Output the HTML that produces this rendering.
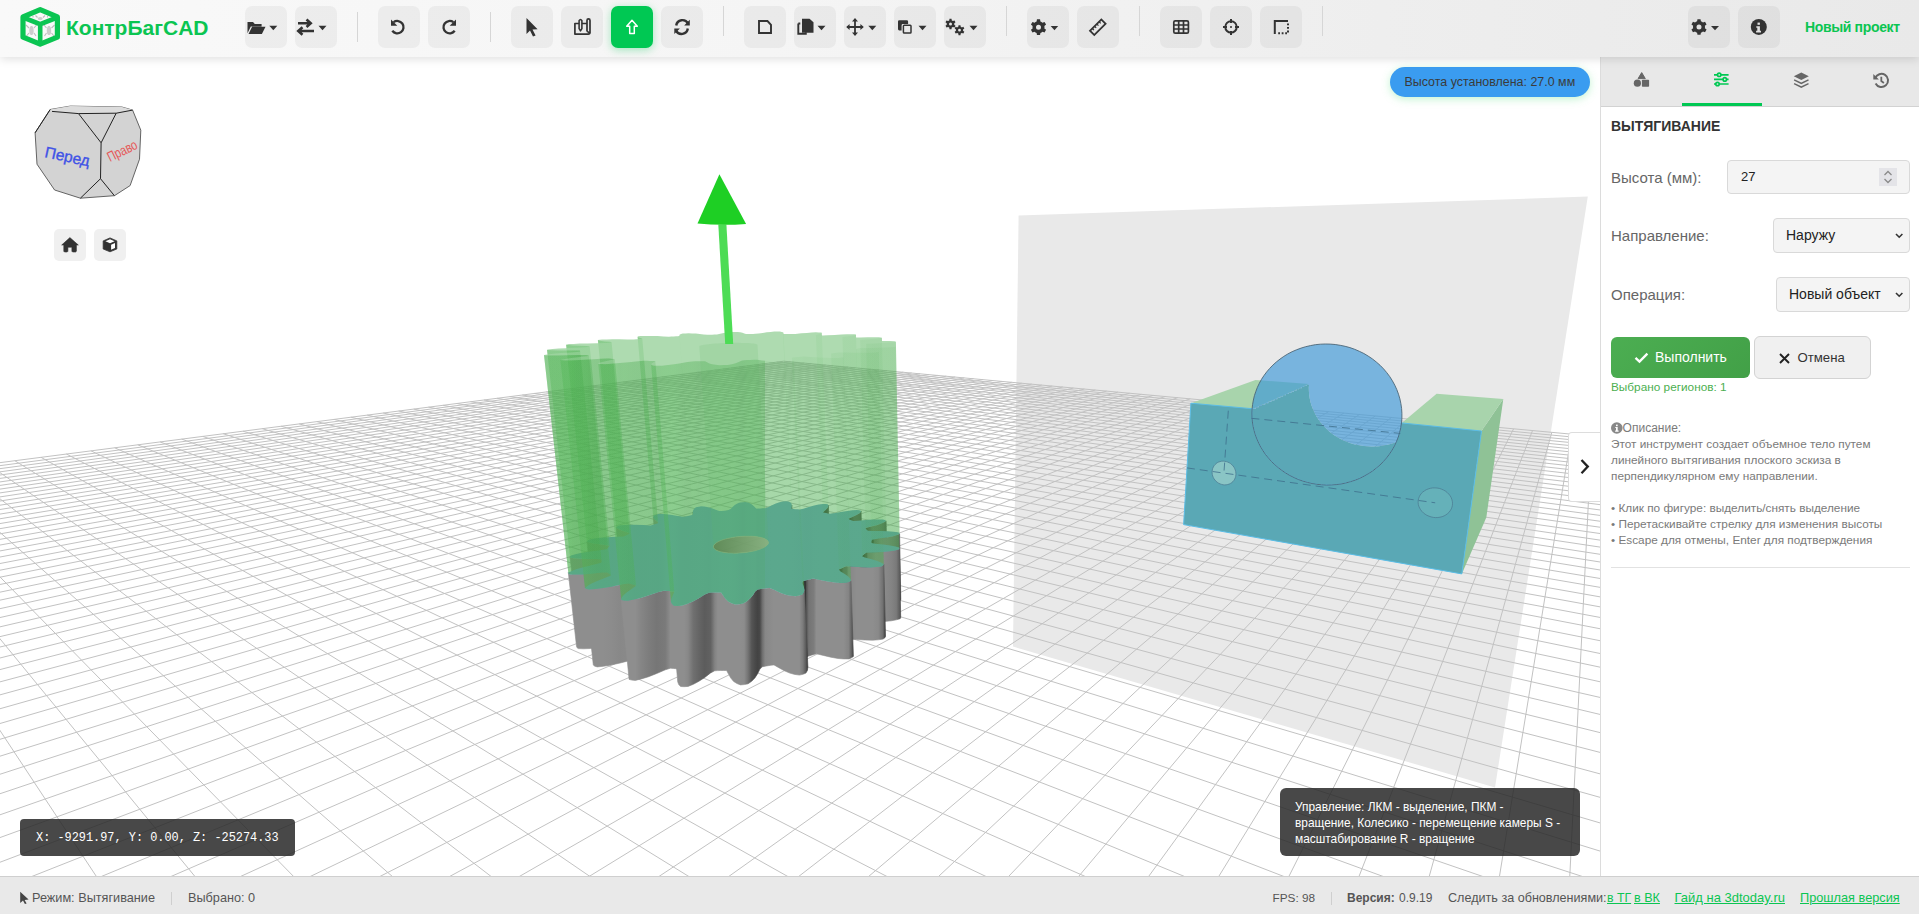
<!DOCTYPE html>
<html><head><meta charset="utf-8">
<style>
*{box-sizing:border-box;margin:0;padding:0}
html,body{width:1919px;height:914px;overflow:hidden;background:#fff;font-family:"Liberation Sans",sans-serif}
.abs{position:absolute}
#scene{position:absolute;left:0;top:0;width:1919px;height:914px}
#hdr{position:absolute;left:0;top:0;width:1919px;height:57px;background:linear-gradient(to right,#f9f9f9 0%,#f5f5f5 40%,#eeeeee 72%,#e9e9e9 100%);box-shadow:0 2px 9px rgba(0,0,0,0.13);z-index:5}
.btn{position:absolute;top:6px;width:42px;height:42px;border-radius:7px;background:rgba(0,0,0,0.045)}
.btn svg{position:absolute;left:0;top:0}
.sep{position:absolute;top:12px;width:1px;height:30px;background:#d6d6d6}
#panel{position:absolute;left:1600px;top:57px;width:319px;height:819px;background:#fff;border-left:1px solid #dcdcdc;z-index:4}
#tabs{position:absolute;left:0;top:0;width:319px;height:50px;background:#e8e8e8;border-bottom:1px solid #d2d2d2}
#status{position:absolute;left:0;top:876px;width:1919px;height:38px;background:#e9e9e9;border-top:1px solid #cfcfcf;z-index:6;font-size:12.7px;color:#555}
.lbl{position:absolute;font-size:15px;color:#666;white-space:nowrap}
.sel{position:absolute;height:34px;border:1px solid #d9d9d9;border-radius:4px;background:#f4f4f4;font-size:14px;color:#222}
.desc{position:absolute;left:10px;font-size:11.8px;color:#7a7a7a;white-space:nowrap}
</style></head><body>
<svg id="scene" width="1919" height="914" viewBox="0 0 1919 914">
<defs><linearGradient id="g1" gradientUnits="userSpaceOnUse" x1="850.4" y1="0" x2="862.9" y2="0"><stop offset="0.000" stop-color="#393939"/><stop offset="0.305" stop-color="#585858"/><stop offset="0.634" stop-color="#545454"/><stop offset="0.871" stop-color="#4a4a4a"/><stop offset="0.972" stop-color="#3e3e3e"/><stop offset="1.000" stop-color="#3a3a3a"/></linearGradient><linearGradient id="g2" gradientUnits="userSpaceOnUse" x1="867.4" y1="0" x2="887.5" y2="0"><stop offset="0.000" stop-color="#494949"/><stop offset="0.272" stop-color="#6d6d6d"/><stop offset="0.567" stop-color="#696969"/><stop offset="0.796" stop-color="#5e5e5e"/><stop offset="0.925" stop-color="#505050"/><stop offset="1.000" stop-color="#363636"/></linearGradient><linearGradient id="g3" gradientUnits="userSpaceOnUse" x1="873.2" y1="0" x2="900.8" y2="0"><stop offset="0.000" stop-color="#363636"/><stop offset="0.001" stop-color="#383838"/><stop offset="0.008" stop-color="#3b3b3b"/><stop offset="0.021" stop-color="#5e5e5e"/><stop offset="0.270" stop-color="#808080"/><stop offset="0.541" stop-color="#7d7d7d"/><stop offset="0.762" stop-color="#737373"/><stop offset="0.903" stop-color="#656565"/><stop offset="1.000" stop-color="#444444"/></linearGradient><linearGradient id="g4" gradientUnits="userSpaceOnUse" x1="864.2" y1="0" x2="900.7" y2="0"><stop offset="0.000" stop-color="#373737"/><stop offset="0.019" stop-color="#454545"/><stop offset="0.042" stop-color="#494949"/><stop offset="0.070" stop-color="#4d4d4d"/><stop offset="0.102" stop-color="#747474"/><stop offset="0.314" stop-color="#8c8c8c"/><stop offset="0.545" stop-color="#8a8a8a"/><stop offset="0.742" stop-color="#848484"/><stop offset="0.879" stop-color="#7a7a7a"/><stop offset="0.982" stop-color="#595959"/><stop offset="1.000" stop-color="#383838"/></linearGradient><linearGradient id="g5" gradientUnits="userSpaceOnUse" x1="841.6" y1="0" x2="885.5" y2="0"><stop offset="0.000" stop-color="#3e3e3e"/><stop offset="0.035" stop-color="#5b5b5b"/><stop offset="0.074" stop-color="#606060"/><stop offset="0.116" stop-color="#656565"/><stop offset="0.161" stop-color="#868686"/><stop offset="0.338" stop-color="#8e8e8e"/><stop offset="0.534" stop-color="#8e8e8e"/><stop offset="0.708" stop-color="#8e8e8e"/><stop offset="0.837" stop-color="#898989"/><stop offset="0.942" stop-color="#707070"/><stop offset="0.981" stop-color="#4a4a4a"/><stop offset="1.000" stop-color="#363636"/></linearGradient><linearGradient id="g6" gradientUnits="userSpaceOnUse" x1="805.9" y1="0" x2="853.4" y2="0"><stop offset="0.000" stop-color="#363636"/><stop offset="0.012" stop-color="#545454"/><stop offset="0.061" stop-color="#747474"/><stop offset="0.112" stop-color="#787878"/><stop offset="0.165" stop-color="#7c7c7c"/><stop offset="0.220" stop-color="#8e8e8e"/><stop offset="0.365" stop-color="#8e8e8e"/><stop offset="0.526" stop-color="#8e8e8e"/><stop offset="0.675" stop-color="#8e8e8e"/><stop offset="0.795" stop-color="#8e8e8e"/><stop offset="0.900" stop-color="#848484"/><stop offset="0.958" stop-color="#636363"/><stop offset="1.000" stop-color="#414141"/></linearGradient><linearGradient id="g7" gradientUnits="userSpaceOnUse" x1="677.7" y1="0" x2="807.9" y2="0"><stop offset="0.000" stop-color="#8e8e8e"/><stop offset="0.008" stop-color="#8e8e8e"/><stop offset="0.023" stop-color="#8e8e8e"/><stop offset="0.050" stop-color="#8e8e8e"/><stop offset="0.080" stop-color="#888888"/><stop offset="0.120" stop-color="#707070"/><stop offset="0.163" stop-color="#656565"/><stop offset="0.208" stop-color="#5c5c5c"/><stop offset="0.253" stop-color="#626262"/><stop offset="0.285" stop-color="#838383"/><stop offset="0.308" stop-color="#8e8e8e"/><stop offset="0.331" stop-color="#8e8e8e"/><stop offset="0.353" stop-color="#8e8e8e"/><stop offset="0.375" stop-color="#8e8e8e"/><stop offset="0.390" stop-color="#8e8e8e"/><stop offset="0.408" stop-color="#8e8e8e"/><stop offset="0.429" stop-color="#8e8e8e"/><stop offset="0.455" stop-color="#8e8e8e"/><stop offset="0.482" stop-color="#8e8e8e"/><stop offset="0.511" stop-color="#8c8c8c"/><stop offset="0.540" stop-color="#747474"/><stop offset="0.568" stop-color="#555555"/><stop offset="0.593" stop-color="#4a4a4a"/><stop offset="0.614" stop-color="#434343"/><stop offset="0.631" stop-color="#484848"/><stop offset="0.650" stop-color="#6e6e6e"/><stop offset="0.672" stop-color="#878787"/><stop offset="0.694" stop-color="#8a8a8a"/><stop offset="0.717" stop-color="#8c8c8c"/><stop offset="0.739" stop-color="#8e8e8e"/><stop offset="0.777" stop-color="#8e8e8e"/><stop offset="0.819" stop-color="#8e8e8e"/><stop offset="0.860" stop-color="#8e8e8e"/><stop offset="0.898" stop-color="#8e8e8e"/><stop offset="0.934" stop-color="#8e8e8e"/><stop offset="0.961" stop-color="#7c7c7c"/><stop offset="0.985" stop-color="#5a5a5a"/><stop offset="0.996" stop-color="#3d3d3d"/><stop offset="1.000" stop-color="#373737"/></linearGradient><linearGradient id="g8" gradientUnits="userSpaceOnUse" x1="629.1" y1="0" x2="680.8" y2="0"><stop offset="0.000" stop-color="#8e8e8e"/><stop offset="0.052" stop-color="#8e8e8e"/><stop offset="0.120" stop-color="#8e8e8e"/><stop offset="0.238" stop-color="#858585"/><stop offset="0.377" stop-color="#7d7d7d"/><stop offset="0.534" stop-color="#767676"/><stop offset="0.700" stop-color="#7a7a7a"/><stop offset="0.801" stop-color="#8e8e8e"/><stop offset="0.854" stop-color="#8e8e8e"/><stop offset="0.905" stop-color="#8e8e8e"/><stop offset="0.953" stop-color="#8e8e8e"/><stop offset="1.000" stop-color="#8e8e8e"/></linearGradient><linearGradient id="g9" gradientUnits="userSpaceOnUse" x1="593.3" y1="0" x2="643.1" y2="0"><stop offset="0.000" stop-color="#8e8e8e"/><stop offset="0.031" stop-color="#8e8e8e"/><stop offset="0.082" stop-color="#8e8e8e"/><stop offset="0.204" stop-color="#8e8e8e"/><stop offset="0.357" stop-color="#8c8c8c"/><stop offset="0.540" stop-color="#888888"/><stop offset="0.742" stop-color="#8a8a8a"/><stop offset="0.853" stop-color="#8e8e8e"/><stop offset="0.894" stop-color="#8e8e8e"/><stop offset="0.933" stop-color="#8e8e8e"/><stop offset="0.968" stop-color="#8e8e8e"/><stop offset="1.000" stop-color="#8e8e8e"/></linearGradient><linearGradient id="g10" gradientUnits="userSpaceOnUse" x1="576.5" y1="0" x2="618.3" y2="0"><stop offset="0.000" stop-color="#8e8e8e"/><stop offset="0.007" stop-color="#8e8e8e"/><stop offset="0.041" stop-color="#8e8e8e"/><stop offset="0.166" stop-color="#8e8e8e"/><stop offset="0.334" stop-color="#8e8e8e"/><stop offset="0.547" stop-color="#8e8e8e"/><stop offset="0.789" stop-color="#8e8e8e"/><stop offset="0.912" stop-color="#8e8e8e"/><stop offset="0.941" stop-color="#8e8e8e"/><stop offset="0.965" stop-color="#8e8e8e"/><stop offset="0.985" stop-color="#8e8e8e"/><stop offset="1.000" stop-color="#8e8e8e"/></linearGradient><linearGradient id="g11" gradientUnits="userSpaceOnUse" x1="577.8" y1="0" x2="608.8" y2="0"><stop offset="0.000" stop-color="#8e8e8e"/><stop offset="0.007" stop-color="#8e8e8e"/><stop offset="0.134" stop-color="#8e8e8e"/><stop offset="0.318" stop-color="#8e8e8e"/><stop offset="0.565" stop-color="#8e8e8e"/><stop offset="0.856" stop-color="#8e8e8e"/><stop offset="0.991" stop-color="#8e8e8e"/><stop offset="1.000" stop-color="#8e8e8e"/></linearGradient><linearGradient id="g12" gradientUnits="userSpaceOnUse" x1="594.0" y1="0" x2="616.4" y2="0"><stop offset="0.000" stop-color="#8e8e8e"/><stop offset="0.108" stop-color="#8e8e8e"/><stop offset="0.289" stop-color="#8e8e8e"/><stop offset="0.549" stop-color="#8e8e8e"/><stop offset="0.869" stop-color="#8e8e8e"/><stop offset="1.000" stop-color="#8e8e8e"/></linearGradient><linearGradient id="g13" gradientUnits="userSpaceOnUse" x1="622.3" y1="0" x2="635.7" y2="0"><stop offset="0.000" stop-color="#8e8e8e"/><stop offset="0.069" stop-color="#8e8e8e"/><stop offset="0.237" stop-color="#8e8e8e"/><stop offset="0.516" stop-color="#8e8e8e"/><stop offset="0.882" stop-color="#8e8e8e"/><stop offset="1.000" stop-color="#8e8e8e"/></linearGradient><linearGradient id="g14" gradientUnits="userSpaceOnUse" x1="658.6" y1="0" x2="663.5" y2="0"><stop offset="0.000" stop-color="#8e8e8e"/><stop offset="0.104" stop-color="#8e8e8e"/><stop offset="0.433" stop-color="#8e8e8e"/><stop offset="0.948" stop-color="#8e8e8e"/><stop offset="1.000" stop-color="#8e8e8e"/></linearGradient><linearGradient id="g15" gradientUnits="userSpaceOnUse" x1="697.4" y1="0" x2="697.6" y2="0"><stop offset="0.000" stop-color="#8e8e8e"/><stop offset="1.000" stop-color="#8e8e8e"/></linearGradient><linearGradient id="g16" gradientUnits="userSpaceOnUse" x1="794.4" y1="0" x2="794.7" y2="0"><stop offset="0.000" stop-color="#404040"/><stop offset="0.537" stop-color="#373737"/><stop offset="1.000" stop-color="#363636"/></linearGradient><linearGradient id="g17" gradientUnits="userSpaceOnUse" x1="825.4" y1="0" x2="830.7" y2="0"><stop offset="0.000" stop-color="#383838"/><stop offset="0.373" stop-color="#454545"/><stop offset="0.771" stop-color="#424242"/><stop offset="0.992" stop-color="#363636"/><stop offset="1.000" stop-color="#3a3a3a"/></linearGradient><linearGradient id="holeg" gradientUnits="userSpaceOnUse" x1="713.5" y1="0" x2="768.4" y2="0"><stop offset="0" stop-color="#5b8452"/><stop offset="0.45" stop-color="#6e9766"/><stop offset="1" stop-color="#86ad7e"/></linearGradient><linearGradient id="g18" gradientUnits="userSpaceOnUse" x1="848.4" y1="0" x2="886.1" y2="0"><stop offset="0.000" stop-color="#4db051"/><stop offset="0.028" stop-color="#4fb553"/><stop offset="0.059" stop-color="#4fb553"/><stop offset="0.094" stop-color="#4fb553"/><stop offset="0.133" stop-color="#4eb352"/><stop offset="0.248" stop-color="#4bac4f"/><stop offset="0.458" stop-color="#4aaa4e"/><stop offset="0.645" stop-color="#4bac4f"/><stop offset="0.798" stop-color="#4caf50"/><stop offset="0.920" stop-color="#4eb452"/><stop offset="0.970" stop-color="#4fb553"/><stop offset="1.000" stop-color="#4db151"/></linearGradient><linearGradient id="g19" gradientUnits="userSpaceOnUse" x1="865.5" y1="0" x2="899.6" y2="0"><stop offset="0.000" stop-color="#4bac4e"/><stop offset="0.011" stop-color="#4eb352"/><stop offset="0.027" stop-color="#4eb452"/><stop offset="0.048" stop-color="#4eb452"/><stop offset="0.075" stop-color="#4fb553"/><stop offset="0.198" stop-color="#4db151"/><stop offset="0.444" stop-color="#4caf50"/><stop offset="0.659" stop-color="#4db151"/><stop offset="0.828" stop-color="#4eb352"/><stop offset="0.956" stop-color="#4fb553"/><stop offset="0.991" stop-color="#4eb352"/><stop offset="1.000" stop-color="#4bac4f"/></linearGradient><linearGradient id="g20" gradientUnits="userSpaceOnUse" x1="871.4" y1="0" x2="899.4" y2="0"><stop offset="0.000" stop-color="#4db151"/><stop offset="0.006" stop-color="#4fb553"/><stop offset="0.138" stop-color="#4eb452"/><stop offset="0.427" stop-color="#4eb352"/><stop offset="0.674" stop-color="#4eb452"/><stop offset="0.860" stop-color="#4fb553"/><stop offset="0.990" stop-color="#4eb553"/><stop offset="1.000" stop-color="#4cb050"/></linearGradient><linearGradient id="g21" gradientUnits="userSpaceOnUse" x1="862.1" y1="0" x2="883.8" y2="0"><stop offset="0.000" stop-color="#4eb352"/><stop offset="0.125" stop-color="#4fb553"/><stop offset="0.443" stop-color="#4fb553"/><stop offset="0.706" stop-color="#4fb553"/><stop offset="0.889" stop-color="#4fb553"/><stop offset="1.000" stop-color="#4db251"/></linearGradient><linearGradient id="g22" gradientUnits="userSpaceOnUse" x1="838.9" y1="0" x2="851.0" y2="0"><stop offset="0.000" stop-color="#4caf50"/><stop offset="0.103" stop-color="#4eb553"/><stop offset="0.489" stop-color="#4fb553"/><stop offset="0.782" stop-color="#4eb452"/><stop offset="0.948" stop-color="#4eb352"/><stop offset="1.000" stop-color="#4cae50"/></linearGradient><linearGradient id="g23" gradientUnits="userSpaceOnUse" x1="802.4" y1="0" x2="804.4" y2="0"><stop offset="0.000" stop-color="#4db251"/><stop offset="0.727" stop-color="#4eb352"/><stop offset="1.000" stop-color="#4db251"/></linearGradient><linearGradient id="g24" gradientUnits="userSpaceOnUse" x1="671.0" y1="0" x2="674.3" y2="0"><stop offset="0.000" stop-color="#4eb452"/><stop offset="0.135" stop-color="#4db252"/><stop offset="0.586" stop-color="#4db251"/><stop offset="1.000" stop-color="#4fb553"/></linearGradient><linearGradient id="g25" gradientUnits="userSpaceOnUse" x1="621.3" y1="0" x2="636.0" y2="0"><stop offset="0.000" stop-color="#4fb553"/><stop offset="0.011" stop-color="#4eb352"/><stop offset="0.105" stop-color="#4db051"/><stop offset="0.352" stop-color="#4cae50"/><stop offset="0.693" stop-color="#4bad4f"/><stop offset="1.000" stop-color="#4eb452"/></linearGradient><linearGradient id="g26" gradientUnits="userSpaceOnUse" x1="585.0" y1="0" x2="610.9" y2="0"><stop offset="0.000" stop-color="#4eb452"/><stop offset="0.079" stop-color="#4caf50"/><stop offset="0.213" stop-color="#4bac4e"/><stop offset="0.446" stop-color="#49a94d"/><stop offset="0.738" stop-color="#49a84d"/><stop offset="1.000" stop-color="#4db051"/></linearGradient><linearGradient id="g27" gradientUnits="userSpaceOnUse" x1="568.3" y1="0" x2="601.6" y2="0"><stop offset="0.000" stop-color="#4db151"/><stop offset="0.104" stop-color="#4aa94d"/><stop offset="0.250" stop-color="#48a64c"/><stop offset="0.475" stop-color="#47a34a"/><stop offset="0.744" stop-color="#46a24a"/><stop offset="0.985" stop-color="#4bac4e"/><stop offset="0.996" stop-color="#4eb352"/><stop offset="0.998" stop-color="#4eb452"/><stop offset="1.000" stop-color="#4eb452"/></linearGradient><linearGradient id="g28" gradientUnits="userSpaceOnUse" x1="570.0" y1="0" x2="609.6" y2="0"><stop offset="0.000" stop-color="#4eb352"/><stop offset="0.021" stop-color="#4bac4f"/><stop offset="0.130" stop-color="#47a34b"/><stop offset="0.270" stop-color="#47a34a"/><stop offset="0.470" stop-color="#48a64c"/><stop offset="0.702" stop-color="#48a74c"/><stop offset="0.912" stop-color="#48a64c"/><stop offset="0.941" stop-color="#4caf50"/><stop offset="0.966" stop-color="#4db051"/><stop offset="0.985" stop-color="#4db151"/><stop offset="1.000" stop-color="#4fb553"/></linearGradient><linearGradient id="g29" gradientUnits="userSpaceOnUse" x1="586.9" y1="0" x2="629.6" y2="0"><stop offset="0.000" stop-color="#4eb553"/><stop offset="0.019" stop-color="#4cb050"/><stop offset="0.059" stop-color="#48a74c"/><stop offset="0.167" stop-color="#48a54b"/><stop offset="0.298" stop-color="#49a94d"/><stop offset="0.475" stop-color="#4aab4e"/><stop offset="0.676" stop-color="#4bac4f"/><stop offset="0.857" stop-color="#47a24a"/><stop offset="0.899" stop-color="#4aaa4e"/><stop offset="0.936" stop-color="#4bac4e"/><stop offset="0.970" stop-color="#4bad4f"/><stop offset="1.000" stop-color="#4eb352"/></linearGradient><linearGradient id="g30" gradientUnits="userSpaceOnUse" x1="616.1" y1="0" x2="658.1" y2="0"><stop offset="0.000" stop-color="#4db251"/><stop offset="0.039" stop-color="#4aab4e"/><stop offset="0.093" stop-color="#46a24a"/><stop offset="0.200" stop-color="#4aab4e"/><stop offset="0.323" stop-color="#4cae50"/><stop offset="0.480" stop-color="#4db051"/><stop offset="0.654" stop-color="#4db151"/><stop offset="0.812" stop-color="#49a94d"/><stop offset="0.864" stop-color="#47a44b"/><stop offset="0.912" stop-color="#48a64c"/><stop offset="0.957" stop-color="#49a74c"/><stop offset="1.000" stop-color="#4caf50"/></linearGradient><linearGradient id="g31" gradientUnits="userSpaceOnUse" x1="653.2" y1="0" x2="693.0" y2="0"><stop offset="0.000" stop-color="#4eb352"/><stop offset="0.012" stop-color="#4cae50"/><stop offset="0.067" stop-color="#48a54b"/><stop offset="0.133" stop-color="#49a84d"/><stop offset="0.234" stop-color="#4cb050"/><stop offset="0.347" stop-color="#4db251"/><stop offset="0.480" stop-color="#4eb452"/><stop offset="0.622" stop-color="#4eb452"/><stop offset="0.752" stop-color="#4cae50"/><stop offset="0.811" stop-color="#47a44b"/><stop offset="0.867" stop-color="#47a24a"/><stop offset="0.922" stop-color="#46a14a"/><stop offset="0.975" stop-color="#4aaa4e"/><stop offset="1.000" stop-color="#4db251"/></linearGradient><linearGradient id="g32" gradientUnits="userSpaceOnUse" x1="692.8" y1="0" x2="791.8" y2="0"><stop offset="0.000" stop-color="#4eb352"/><stop offset="0.015" stop-color="#4cb050"/><stop offset="0.058" stop-color="#47a34b"/><stop offset="0.120" stop-color="#4eb352"/><stop offset="0.194" stop-color="#4fb553"/><stop offset="0.268" stop-color="#4db251"/><stop offset="0.315" stop-color="#49a94d"/><stop offset="0.361" stop-color="#47a44b"/><stop offset="0.401" stop-color="#4caf50"/><stop offset="0.449" stop-color="#4aab4e"/><stop offset="0.504" stop-color="#4aaa4e"/><stop offset="0.558" stop-color="#4fb553"/><stop offset="0.605" stop-color="#4eb553"/><stop offset="0.640" stop-color="#4eb553"/><stop offset="0.685" stop-color="#4cae50"/><stop offset="0.731" stop-color="#47a44b"/><stop offset="0.800" stop-color="#4aaa4e"/><stop offset="0.876" stop-color="#48a54b"/><stop offset="0.939" stop-color="#4caf50"/><stop offset="0.982" stop-color="#4fb553"/><stop offset="1.000" stop-color="#4db252"/><stop offset="1.000" stop-color="#4db252"/></linearGradient><linearGradient id="g33" gradientUnits="userSpaceOnUse" x1="791.4" y1="0" x2="828.4" y2="0"><stop offset="0.000" stop-color="#4fb553"/><stop offset="0.053" stop-color="#4eb352"/><stop offset="0.108" stop-color="#4db251"/><stop offset="0.164" stop-color="#4db151"/><stop offset="0.223" stop-color="#4aaa4e"/><stop offset="0.321" stop-color="#46a24a"/><stop offset="0.471" stop-color="#47a44b"/><stop offset="0.612" stop-color="#46a24a"/><stop offset="0.737" stop-color="#47a34b"/><stop offset="0.848" stop-color="#4bac4f"/><stop offset="0.919" stop-color="#4eb352"/><stop offset="0.980" stop-color="#4fb553"/><stop offset="1.000" stop-color="#4eb352"/></linearGradient><linearGradient id="g34" gradientUnits="userSpaceOnUse" x1="822.9" y1="0" x2="861.1" y2="0"><stop offset="0.000" stop-color="#4eb452"/><stop offset="0.041" stop-color="#4fb553"/><stop offset="0.085" stop-color="#4eb553"/><stop offset="0.131" stop-color="#4eb452"/><stop offset="0.181" stop-color="#4cb050"/><stop offset="0.288" stop-color="#48a64c"/><stop offset="0.469" stop-color="#47a44b"/><stop offset="0.635" stop-color="#48a74c"/><stop offset="0.775" stop-color="#4aaa4d"/><stop offset="0.892" stop-color="#4db151"/><stop offset="0.954" stop-color="#4fb553"/><stop offset="1.000" stop-color="#4eb452"/></linearGradient><linearGradient id="g35" gradientUnits="userSpaceOnUse" x1="848.4" y1="0" x2="861.1" y2="0"><stop offset="0.000" stop-color="#4db051"/><stop offset="0.305" stop-color="#49a84d"/><stop offset="0.633" stop-color="#49a94d"/><stop offset="0.870" stop-color="#4bac4e"/><stop offset="0.971" stop-color="#4caf50"/><stop offset="1.000" stop-color="#4eb452"/></linearGradient><linearGradient id="g36" gradientUnits="userSpaceOnUse" x1="865.5" y1="0" x2="886.1" y2="0"><stop offset="0.000" stop-color="#4bac4e"/><stop offset="0.272" stop-color="#46a24a"/><stop offset="0.567" stop-color="#47a34a"/><stop offset="0.796" stop-color="#48a64c"/><stop offset="0.925" stop-color="#4aa94d"/><stop offset="1.000" stop-color="#4db151"/></linearGradient><linearGradient id="g37" gradientUnits="userSpaceOnUse" x1="871.4" y1="0" x2="899.6" y2="0"><stop offset="0.000" stop-color="#4db151"/><stop offset="0.001" stop-color="#4db051"/><stop offset="0.008" stop-color="#4caf50"/><stop offset="0.022" stop-color="#48a64c"/><stop offset="0.270" stop-color="#48a74c"/><stop offset="0.541" stop-color="#48a64c"/><stop offset="0.762" stop-color="#47a34a"/><stop offset="0.903" stop-color="#47a34b"/><stop offset="1.000" stop-color="#4bac4f"/></linearGradient><linearGradient id="g38" gradientUnits="userSpaceOnUse" x1="862.1" y1="0" x2="899.4" y2="0"><stop offset="0.000" stop-color="#4eb352"/><stop offset="0.019" stop-color="#4bad4f"/><stop offset="0.042" stop-color="#4bac4e"/><stop offset="0.070" stop-color="#4aaa4e"/><stop offset="0.103" stop-color="#47a24a"/><stop offset="0.314" stop-color="#4bac4f"/><stop offset="0.546" stop-color="#4aab4e"/><stop offset="0.742" stop-color="#49a94d"/><stop offset="0.879" stop-color="#48a54b"/><stop offset="0.982" stop-color="#48a74c"/><stop offset="1.000" stop-color="#4cb050"/></linearGradient><linearGradient id="g39" gradientUnits="userSpaceOnUse" x1="838.9" y1="0" x2="883.8" y2="0"><stop offset="0.000" stop-color="#4caf50"/><stop offset="0.036" stop-color="#49a74c"/><stop offset="0.074" stop-color="#48a64c"/><stop offset="0.116" stop-color="#47a44b"/><stop offset="0.161" stop-color="#49a94d"/><stop offset="0.339" stop-color="#4db151"/><stop offset="0.534" stop-color="#4db051"/><stop offset="0.708" stop-color="#4cae50"/><stop offset="0.837" stop-color="#4aab4e"/><stop offset="0.942" stop-color="#46a24a"/><stop offset="0.981" stop-color="#4aab4e"/><stop offset="1.000" stop-color="#4db251"/></linearGradient><linearGradient id="g40" gradientUnits="userSpaceOnUse" x1="802.4" y1="0" x2="851.0" y2="0"><stop offset="0.000" stop-color="#4db251"/><stop offset="0.012" stop-color="#4aaa4e"/><stop offset="0.062" stop-color="#46a14a"/><stop offset="0.113" stop-color="#47a24a"/><stop offset="0.166" stop-color="#47a44b"/><stop offset="0.221" stop-color="#4cae50"/><stop offset="0.365" stop-color="#4eb452"/><stop offset="0.526" stop-color="#4eb452"/><stop offset="0.674" stop-color="#4db251"/><stop offset="0.795" stop-color="#4cb050"/><stop offset="0.900" stop-color="#49a84d"/><stop offset="0.958" stop-color="#48a54b"/><stop offset="1.000" stop-color="#4cae50"/></linearGradient><linearGradient id="g41" gradientUnits="userSpaceOnUse" x1="671.0" y1="0" x2="804.4" y2="0"><stop offset="0.000" stop-color="#4eb452"/><stop offset="0.008" stop-color="#4fb553"/><stop offset="0.022" stop-color="#4eb452"/><stop offset="0.049" stop-color="#4caf50"/><stop offset="0.079" stop-color="#48a64c"/><stop offset="0.120" stop-color="#48a54b"/><stop offset="0.163" stop-color="#49a84d"/><stop offset="0.209" stop-color="#4aaa4e"/><stop offset="0.254" stop-color="#49a84d"/><stop offset="0.285" stop-color="#47a44b"/><stop offset="0.309" stop-color="#4bad4f"/><stop offset="0.331" stop-color="#4cae50"/><stop offset="0.354" stop-color="#4caf50"/><stop offset="0.376" stop-color="#4eb553"/><stop offset="0.391" stop-color="#4eb452"/><stop offset="0.408" stop-color="#4eb553"/><stop offset="0.429" stop-color="#4fb553"/><stop offset="0.454" stop-color="#4fb553"/><stop offset="0.481" stop-color="#4db251"/><stop offset="0.511" stop-color="#4aaa4e"/><stop offset="0.540" stop-color="#46a24a"/><stop offset="0.567" stop-color="#4aab4e"/><stop offset="0.593" stop-color="#4bad4f"/><stop offset="0.614" stop-color="#4caf50"/><stop offset="0.632" stop-color="#4cae4f"/><stop offset="0.651" stop-color="#47a44b"/><stop offset="0.673" stop-color="#49a74c"/><stop offset="0.695" stop-color="#49a94d"/><stop offset="0.717" stop-color="#4aaa4e"/><stop offset="0.740" stop-color="#4db251"/><stop offset="0.777" stop-color="#4fb553"/><stop offset="0.819" stop-color="#4fb553"/><stop offset="0.860" stop-color="#4eb553"/><stop offset="0.898" stop-color="#4eb352"/><stop offset="0.934" stop-color="#4bad4f"/><stop offset="0.961" stop-color="#47a34b"/><stop offset="0.984" stop-color="#49a84d"/><stop offset="0.996" stop-color="#4cb050"/><stop offset="1.000" stop-color="#4db251"/></linearGradient><linearGradient id="g42" gradientUnits="userSpaceOnUse" x1="621.3" y1="0" x2="674.3" y2="0"><stop offset="0.000" stop-color="#4fb553"/><stop offset="0.052" stop-color="#4eb352"/><stop offset="0.119" stop-color="#4bac4f"/><stop offset="0.238" stop-color="#47a34b"/><stop offset="0.377" stop-color="#46a24a"/><stop offset="0.535" stop-color="#47a44b"/><stop offset="0.701" stop-color="#46a24a"/><stop offset="0.802" stop-color="#4aaa4e"/><stop offset="0.855" stop-color="#4db151"/><stop offset="0.905" stop-color="#4db251"/><stop offset="0.954" stop-color="#4eb352"/><stop offset="1.000" stop-color="#4fb553"/></linearGradient><linearGradient id="g43" gradientUnits="userSpaceOnUse" x1="585.0" y1="0" x2="636.0" y2="0"><stop offset="0.000" stop-color="#4eb452"/><stop offset="0.030" stop-color="#4fb553"/><stop offset="0.081" stop-color="#4db151"/><stop offset="0.203" stop-color="#4aaa4d"/><stop offset="0.356" stop-color="#48a74c"/><stop offset="0.541" stop-color="#47a44b"/><stop offset="0.743" stop-color="#48a64c"/><stop offset="0.854" stop-color="#4cb050"/><stop offset="0.895" stop-color="#4eb452"/><stop offset="0.933" stop-color="#4eb553"/><stop offset="0.968" stop-color="#4fb553"/><stop offset="1.000" stop-color="#4eb452"/></linearGradient><linearGradient id="g44" gradientUnits="userSpaceOnUse" x1="568.3" y1="0" x2="610.9" y2="0"><stop offset="0.000" stop-color="#4db151"/><stop offset="0.007" stop-color="#4fb553"/><stop offset="0.039" stop-color="#4eb452"/><stop offset="0.165" stop-color="#4caf50"/><stop offset="0.334" stop-color="#4bac4f"/><stop offset="0.548" stop-color="#4aaa4e"/><stop offset="0.791" stop-color="#4bac4f"/><stop offset="0.914" stop-color="#4eb352"/><stop offset="0.942" stop-color="#4fb553"/><stop offset="0.966" stop-color="#4fb553"/><stop offset="0.985" stop-color="#4fb553"/><stop offset="1.000" stop-color="#4db051"/></linearGradient><linearGradient id="g45" gradientUnits="userSpaceOnUse" x1="570.0" y1="0" x2="601.5" y2="0"><stop offset="0.000" stop-color="#4eb352"/><stop offset="0.006" stop-color="#4fb553"/><stop offset="0.133" stop-color="#4eb352"/><stop offset="0.318" stop-color="#4db151"/><stop offset="0.565" stop-color="#4caf50"/><stop offset="0.856" stop-color="#4db151"/><stop offset="0.991" stop-color="#4fb553"/><stop offset="1.000" stop-color="#4eb452"/></linearGradient><linearGradient id="g46" gradientUnits="userSpaceOnUse" x1="586.9" y1="0" x2="609.6" y2="0"><stop offset="0.000" stop-color="#4eb553"/><stop offset="0.108" stop-color="#4fb553"/><stop offset="0.288" stop-color="#4eb452"/><stop offset="0.548" stop-color="#4eb352"/><stop offset="0.869" stop-color="#4eb452"/><stop offset="1.000" stop-color="#4fb553"/></linearGradient><linearGradient id="g47" gradientUnits="userSpaceOnUse" x1="616.1" y1="0" x2="629.6" y2="0"><stop offset="0.000" stop-color="#4db251"/><stop offset="0.068" stop-color="#4fb553"/><stop offset="0.235" stop-color="#4fb553"/><stop offset="0.515" stop-color="#4fb553"/><stop offset="0.882" stop-color="#4fb553"/><stop offset="1.000" stop-color="#4eb352"/></linearGradient><linearGradient id="g48" gradientUnits="userSpaceOnUse" x1="653.2" y1="0" x2="658.1" y2="0"><stop offset="0.000" stop-color="#4eb352"/><stop offset="0.100" stop-color="#4eb452"/><stop offset="0.431" stop-color="#4fb553"/><stop offset="0.951" stop-color="#4eb553"/><stop offset="1.000" stop-color="#4caf50"/></linearGradient><linearGradient id="g49" gradientUnits="userSpaceOnUse" x1="692.8" y1="0" x2="693.0" y2="0"><stop offset="0.000" stop-color="#4eb352"/><stop offset="1.000" stop-color="#4db251"/></linearGradient><linearGradient id="g50" gradientUnits="userSpaceOnUse" x1="791.4" y1="0" x2="791.8" y2="0"><stop offset="0.000" stop-color="#4fb553"/><stop offset="0.530" stop-color="#4db251"/><stop offset="1.000" stop-color="#4db252"/></linearGradient><linearGradient id="g51" gradientUnits="userSpaceOnUse" x1="822.9" y1="0" x2="828.4" y2="0"><stop offset="0.000" stop-color="#4eb452"/><stop offset="0.373" stop-color="#4bad4f"/><stop offset="0.770" stop-color="#4cae50"/><stop offset="0.994" stop-color="#4eb352"/><stop offset="1.000" stop-color="#4db051"/></linearGradient><clipPath id="vp"><rect x="0" y="57" width="1600" height="819"/></clipPath></defs>
<g clip-path="url(#vp)">
<polygon points="1018.6,215.5 1587.8,196.6 1495.0,787.4 1013.0,646.6" fill="#e9e9e9"/>
<path d="M783.7 361.2L1602.0 437.0M783.7 361.2L-2.0 462.9M776.6 362.1L1602.0 439.8M790.5 361.8L-2.0 465.9M769.3 363.0L1602.0 442.7M797.4 362.4L-2.0 468.9M761.9 364.0L1602.0 445.6M804.3 363.1L-2.0 472.1M754.4 365.0L1602.0 448.7M811.4 363.7L-2.0 475.3M746.8 365.9L1602.0 451.9M818.5 364.4L-2.0 478.7M739.0 367.0L1602.0 455.1M825.7 365.1L-2.0 482.2M731.0 368.0L1602.0 458.5M833.0 365.7L-2.0 485.7M722.9 369.0L1602.0 462.0M840.4 366.4L-2.0 489.4M714.7 370.1L1602.0 465.6M847.9 367.1L-2.0 493.2M706.3 371.2L1602.0 469.3M855.5 367.8L-2.0 497.2M697.7 372.3L1602.0 473.2M863.2 368.5L-2.0 501.3M689.0 373.4L1602.0 477.2M871.0 369.3L-2.0 505.5M680.1 374.6L1602.0 481.4M878.9 370.0L-2.0 509.8M671.0 375.7L1602.0 485.8M886.9 370.7L-2.0 514.4M661.8 376.9L1602.0 490.3M895.1 371.5L-2.0 519.1M652.4 378.2L1602.0 494.9M903.3 372.2L-2.0 523.9M642.7 379.4L1602.0 499.8M911.6 373.0L-2.0 529.0M632.9 380.7L1602.0 504.9M920.1 373.8L-2.0 534.2M622.9 382.0L1602.0 510.2M928.7 374.6L-2.0 539.7M612.6 383.3L1602.0 515.7M937.4 375.4L-2.0 545.4M602.2 384.7L1602.0 521.5M946.2 376.2L-2.0 551.3M591.5 386.0L1602.0 527.5M955.2 377.0L-2.0 557.4M580.6 387.5L1602.0 533.8M964.2 377.9L-2.0 563.9M569.4 388.9L1602.0 540.4M973.4 378.7L-2.0 570.6M558.0 390.4L1602.0 547.4M982.8 379.6L-2.0 577.6M546.4 391.9L1602.0 554.6M992.3 380.5L-2.0 584.9M534.5 393.4L1602.0 562.3M1001.9 381.4L-2.0 592.6M522.3 395.0L1602.0 570.3M1011.6 382.3L-2.0 600.6M509.8 396.6L1602.0 578.8M1021.6 383.2L-2.0 609.1M497.1 398.3L1602.0 587.7M1031.6 384.1L-2.0 618.0M484.0 400.0L1602.0 597.2M1041.8 385.1L-2.0 627.3M470.6 401.7L1602.0 607.2M1052.2 386.0L-2.0 637.1M456.9 403.5L1602.0 617.8M1062.7 387.0L-2.0 647.5M442.9 405.3L1602.0 629.1M1073.4 388.0L-2.0 658.5M428.5 407.1L1602.0 641.1M1084.3 389.0L-2.0 670.1M413.8 409.1L1602.0 653.9M1095.3 390.0L-2.0 682.4M398.7 411.0L1602.0 667.6M1106.5 391.1L-2.0 695.4M383.2 413.0L1602.0 682.2M1117.9 392.1L-2.0 709.3M367.2 415.1L1602.0 697.9M1129.5 393.2L-2.0 724.1M350.9 417.2L1602.0 714.9M1141.2 394.3L-2.0 739.9M334.1 419.4L1602.0 733.1M1153.2 395.4L-2.0 756.8M316.9 421.6L1602.0 752.9M1165.3 396.5L-2.0 774.9M299.2 423.9L1602.0 774.4M1177.7 397.7L-2.0 794.4M281.0 426.2L1602.0 797.9M1190.2 398.8L-2.0 815.5M262.3 428.7L1602.0 823.5M1203.0 400.0L-2.0 838.3M243.0 431.2L1602.0 851.7M1216.0 401.2L-2.0 863.0M223.2 433.7L1587.0 878.0M1229.2 402.5L28.0 878.0M202.8 436.4L1487.2 878.0M1242.7 403.7L97.7 878.0M181.7 439.1L1387.4 878.0M1256.4 405.0L167.5 878.0M160.1 441.9L1287.8 878.0M1270.3 406.3L237.2 878.0M137.8 444.8L1188.2 878.0M1284.5 407.6L307.1 878.0M114.7 447.8L1088.7 878.0M1298.9 408.9L376.9 878.0M90.9 450.8L989.2 878.0M1313.6 410.3L446.8 878.0M66.4 454.0L889.9 878.0M1328.6 411.7L516.7 878.0M41.0 457.3L790.5 878.0M1343.9 413.1L586.6 878.0M14.8 460.7L691.3 878.0M1359.4 414.5L656.6 878.0M-2.0 471.3L592.2 878.0M1375.2 416.0L726.6 878.0M-2.0 497.3L493.1 878.0M1391.4 417.5L796.7 878.0M-2.0 530.7L394.1 878.0M1407.8 419.0L866.8 878.0M-2.0 574.9L295.1 878.0M1424.6 420.6L936.9 878.0M-2.0 636.4L196.2 878.0M1441.7 422.1L1007.1 878.0M-2.0 727.5L97.4 878.0M1459.1 423.8L1077.3 878.0M-2.0 876.6L-1.3 878.0M1476.9 425.4L1147.5 878.0M1495.1 427.1L1217.8 878.0M1513.6 428.8L1288.1 878.0M1532.5 430.6L1358.4 878.0M1551.8 432.4L1428.8 878.0M1571.5 434.2L1499.2 878.0M1591.7 436.0L1569.7 878.0" stroke="#c2c2c2" stroke-width="1" fill="none"/>
<polygon points="791.8,505.0 791.6,506.9 791.4,508.8 794.4,569.0 794.5,566.8 794.7,564.4" fill="url(#g16)" stroke="url(#g16)" stroke-width="0.6"/>
<polygon points="828.4,505.3 828.4,506.6 827.2,508.3 825.0,510.4 822.9,512.3 825.4,573.3 827.4,571.0 829.5,568.5 830.7,566.4 830.7,564.8" fill="url(#g17)" stroke="url(#g17)" stroke-width="0.6"/>
<polygon points="693.0,513.9 692.8,511.9 697.4,572.7 697.6,575.3" fill="url(#g15)" stroke="url(#g15)" stroke-width="0.6"/>
<polygon points="861.1,510.9 860.8,512.0 859.5,513.3 856.5,515.1 852.3,517.0 848.4,518.8 850.4,581.2 854.3,579.1 858.4,576.7 861.3,574.6 862.6,573.0 862.9,571.6" fill="url(#g1)" stroke="url(#g1)" stroke-width="0.6"/>
<polygon points="658.1,523.0 657.8,521.9 655.3,520.0 653.7,518.2 653.2,516.7 658.6,578.6 659.1,580.5 660.7,582.6 663.2,584.9 663.5,586.3" fill="url(#g14)" stroke="url(#g14)" stroke-width="0.6"/>
<polygon points="886.1,520.9 884.5,522.0 881.9,523.3 877.2,524.9 871.1,526.6 865.5,528.1 867.4,592.5 872.8,590.7 878.8,588.7 883.4,586.8 886.0,585.2 887.5,583.8" fill="url(#g2)" stroke="url(#g2)" stroke-width="0.6"/>
<polygon points="629.6,533.5 628.0,532.5 623.0,531.0 619.3,529.5 617.0,528.2 616.1,527.0 622.3,591.1 623.3,592.6 625.5,594.2 629.2,595.9 634.1,597.7 635.7,599.0" fill="url(#g13)" stroke="url(#g13)" stroke-width="0.6"/>
<polygon points="899.6,534.0 896.8,535.1 892.9,536.2 886.7,537.4 879.0,538.6 872.1,539.7 871.7,540.5 871.5,541.3 871.4,542.1 873.2,609.6 873.3,608.6 873.5,607.6 873.8,606.7 880.7,605.4 888.1,603.9 894.3,602.5 898.1,601.1 900.8,599.8" fill="url(#g3)" stroke="url(#g3)" stroke-width="0.6"/>
<polygon points="609.6,546.0 606.6,545.2 599.4,544.3 593.4,543.4 589.4,542.4 586.9,541.4 594.0,608.5 596.4,609.8 600.5,611.0 606.3,612.1 613.4,613.2 616.4,614.1" fill="url(#g12)" stroke="url(#g12)" stroke-width="0.6"/>
<polygon points="899.4,548.6 898.7,549.6 894.9,550.5 889.8,551.3 882.5,552.0 873.8,552.4 866.0,552.8 864.8,553.7 863.7,554.5 862.8,555.4 862.1,556.2 864.2,626.7 864.9,625.6 865.7,624.6 866.8,623.6 868.0,622.6 875.7,622.1 884.1,621.5 891.3,620.8 896.3,619.8 900.1,618.7 900.7,617.5" fill="url(#g4)" stroke="url(#g4)" stroke-width="0.6"/>
<polygon points="601.5,560.2 601.3,559.4 597.0,559.0 587.8,559.0 580.0,558.8 574.2,558.3 570.2,557.7 570.0,556.7 577.8,627.1 578.0,628.3 582.0,629.1 587.7,629.7 595.3,629.9 604.3,629.9 608.5,630.4 608.8,631.4" fill="url(#g11)" stroke="url(#g11)" stroke-width="0.6"/>
<polygon points="883.8,564.3 882.9,565.5 881.2,566.5 876.5,567.0 870.7,567.4 862.9,567.2 854.1,566.8 846.2,566.3 844.1,567.1 842.3,567.9 840.5,568.7 838.9,569.6 841.6,642.8 843.1,641.8 844.8,640.8 846.6,639.8 848.6,638.9 856.4,639.5 865.0,640.0 872.7,640.2 878.3,639.8 883.0,639.1 884.7,637.9 885.5,636.5" fill="url(#g5)" stroke="url(#g5)" stroke-width="0.6"/>
<polygon points="610.9,575.5 610.3,574.7 609.4,573.9 608.4,573.2 607.2,572.5 602.0,572.6 591.6,573.7 582.5,574.4 575.3,574.6 570.0,574.5 568.6,573.6 568.3,572.5 576.5,646.2 576.9,647.5 578.2,648.6 583.5,648.8 590.5,648.5 599.4,647.7 609.5,646.4 614.7,646.2 615.9,647.1 616.9,648.0 617.7,648.9 618.3,649.9" fill="url(#g10)" stroke="url(#g10)" stroke-width="0.6"/>
<polygon points="851.0,580.8 848.9,581.9 846.1,582.8 841.0,582.9 835.1,582.5 827.9,581.5 820.1,580.0 813.1,578.6 810.4,579.2 807.9,579.8 805.4,580.5 803.0,581.2 802.4,583.1 805.9,659.2 806.5,656.9 808.8,656.0 811.2,655.2 813.8,654.4 816.4,653.8 823.3,655.4 830.9,657.2 838.0,658.5 843.7,658.9 848.7,658.9 851.4,657.8 853.4,656.4" fill="url(#g6)" stroke="url(#g6)" stroke-width="0.6"/>
<polygon points="636.0,585.8 634.3,585.1 632.6,584.5 630.6,584.0 628.5,583.5 622.8,584.2 612.5,586.4 603.1,588.1 595.3,589.1 589.1,589.6 586.5,589.0 585.0,588.1 593.3,665.1 594.8,666.2 597.3,666.9 603.4,666.3 611.0,665.0 620.2,663.0 630.2,660.4 635.7,659.5 637.8,660.1 639.7,660.8 641.5,661.5 643.1,662.3" fill="url(#g9)" stroke="url(#g9)" stroke-width="0.6"/>
<polygon points="674.3,591.8 671.9,591.4 669.3,591.1 666.6,590.9 663.8,590.7 658.5,592.0 649.7,595.1 641.3,597.7 633.9,599.6 627.6,600.8 624.1,600.5 621.3,599.9 629.1,679.4 631.8,680.1 635.3,680.4 641.4,678.9 648.6,676.7 656.7,673.5 665.3,669.8 670.5,668.2 673.2,668.4 675.8,668.7 678.3,669.1 680.8,669.6" fill="url(#g8)" stroke="url(#g8)" stroke-width="0.6"/>
<polygon points="804.4,589.8 803.8,592.4 802.3,594.6 799.1,595.6 795.5,596.3 790.7,595.7 785.7,594.7 780.2,592.7 774.6,590.1 769.7,587.9 766.7,588.2 763.7,588.5 760.7,588.9 757.8,589.4 755.2,591.4 752.9,595.2 750.0,598.6 746.7,601.4 743.0,603.6 739.1,604.3 735.2,604.5 731.5,603.3 728.2,601.6 725.4,598.8 723.1,595.5 721.1,592.6 718.2,592.5 715.2,592.5 712.1,592.6 709.0,592.8 704.8,594.5 698.8,598.2 692.8,601.5 687.0,604.0 681.5,605.8 677.5,606.0 673.9,605.8 672.0,604.1 671.0,601.9 677.7,681.8 678.7,684.5 680.6,686.5 684.1,686.7 688.1,686.4 693.3,684.3 698.9,681.3 704.8,677.4 710.6,672.9 714.7,670.8 717.8,670.6 720.7,670.5 723.7,670.5 726.6,670.5 728.5,674.1 730.8,678.1 733.6,681.4 736.9,683.5 740.5,684.9 744.3,684.6 748.1,683.8 751.7,681.2 754.9,677.9 757.6,673.7 759.9,669.1 762.3,666.8 765.2,666.2 768.1,665.7 771.0,665.2 774.0,664.9 778.8,667.7 784.3,670.7 789.7,673.1 794.7,674.4 799.4,675.1 802.9,674.3 805.9,673.1 807.4,670.4 807.9,667.2" fill="url(#g7)" stroke="url(#g7)" stroke-width="0.6"/>
<path d="M833.9,513.2 L840.9,511.9 L847.2,510.9 L852.5,510.3 L857.0,510.0 L859.4,510.3 L861.1,510.9 L860.8,512.0 L859.5,513.3 L856.5,515.1 L852.3,517.0 L848.4,518.8 L849.4,519.4 L850.6,519.9 L851.9,520.4 L853.4,520.9 L857.7,520.8 L865.6,520.1 L872.7,519.6 L878.5,519.4 L883.0,519.5 L884.9,520.1 L886.1,520.9 L884.5,522.0 L881.9,523.3 L877.2,524.9 L871.1,526.6 L865.5,528.1 L865.9,528.8 L866.5,529.5 L867.2,530.2 L868.1,530.8 L872.3,531.1 L880.6,531.1 L888.0,531.3 L893.7,531.7 L898.1,532.2 L899.2,533.1 L899.6,534.0 L896.8,535.1 L892.9,536.2 L886.7,537.4 L879.0,538.6 L872.1,539.7 L871.7,540.5 L871.5,541.3 L871.4,542.1 L871.6,542.9 L875.3,543.7 L883.4,544.5 L890.3,545.5 L895.5,546.5 L899.1,547.5 L899.4,548.6 L898.7,549.6 L894.9,550.5 L889.8,551.3 L882.5,552.0 L873.8,552.4 L866.0,552.8 L864.8,553.7 L863.7,554.5 L862.8,555.4 L862.1,556.2 L864.8,557.5 L871.7,559.3 L877.4,561.0 L881.4,562.7 L883.8,564.3 L882.9,565.5 L881.2,566.5 L876.5,567.0 L870.7,567.4 L862.9,567.2 L854.1,566.8 L846.2,566.3 L844.1,567.1 L842.3,567.9 L840.5,568.7 L838.9,569.6 L840.2,571.2 L844.8,573.9 L848.3,576.5 L850.3,578.8 L851.0,580.8 L848.9,581.9 L846.1,582.8 L841.0,582.9 L835.1,582.5 L827.9,581.5 L820.1,580.0 L813.1,578.6 L810.4,579.2 L807.9,579.8 L805.4,580.5 L803.0,581.2 L802.4,583.1 L803.8,586.6 L804.4,589.8 L803.8,592.4 L802.3,594.6 L799.1,595.6 L795.5,596.3 L790.7,595.7 L785.7,594.7 L780.2,592.7 L774.6,590.1 L769.7,587.9 L766.7,588.2 L763.7,588.5 L760.7,588.9 L757.8,589.4 L755.2,591.4 L752.9,595.2 L750.0,598.6 L746.7,601.4 L743.0,603.6 L739.1,604.3 L735.2,604.5 L731.5,603.3 L728.2,601.6 L725.4,598.8 L723.1,595.5 L721.1,592.6 L718.2,592.5 L715.2,592.5 L712.1,592.6 L709.0,592.8 L704.8,594.5 L698.8,598.2 L692.8,601.5 L687.0,604.0 L681.5,605.8 L677.5,606.0 L673.9,605.8 L672.0,604.1 L671.0,601.9 L671.4,598.8 L672.9,595.1 L674.3,591.8 L671.9,591.4 L669.3,591.1 L666.6,590.9 L663.8,590.7 L658.5,592.0 L649.7,595.1 L641.3,597.7 L633.9,599.6 L627.6,600.8 L624.1,600.5 L621.3,599.9 L621.5,598.0 L622.9,595.7 L626.5,592.5 L631.5,588.9 L636.0,585.8 L634.3,585.1 L632.6,584.5 L630.6,584.0 L628.5,583.5 L622.8,584.2 L612.5,586.4 L603.1,588.1 L595.3,589.1 L589.1,589.6 L586.5,589.0 L585.0,588.1 L587.0,586.2 L590.5,584.0 L596.5,581.2 L604.1,578.2 L610.9,575.5 L610.3,574.7 L609.4,573.9 L608.4,573.2 L607.2,572.5 L602.0,572.6 L591.6,573.7 L582.5,574.4 L575.3,574.6 L570.0,574.5 L568.6,573.6 L568.3,572.5 L571.8,570.9 L576.6,569.1 L584.1,567.0 L593.1,564.8 L601.1,562.8 L601.5,561.9 L601.6,561.0 L601.5,560.2 L601.3,559.4 L597.0,559.0 L587.8,559.0 L580.0,558.8 L574.2,558.3 L570.2,557.7 L570.0,556.7 L570.8,555.6 L575.1,554.3 L580.7,553.1 L588.6,551.7 L597.8,550.4 L606.1,549.3 L607.3,548.4 L608.2,547.6 L609.0,546.8 L609.6,546.0 L606.6,545.2 L599.4,544.3 L593.4,543.4 L589.4,542.4 L586.9,541.4 L587.7,540.4 L589.4,539.4 L594.0,538.6 L599.6,537.8 L607.2,537.3 L615.7,536.8 L623.5,536.5 L625.3,535.7 L626.9,535.0 L628.3,534.3 L629.6,533.5 L628.0,532.5 L623.0,531.0 L619.3,529.5 L617.0,528.2 L616.1,527.0 L617.7,526.1 L620.0,525.3 L624.5,524.9 L629.7,524.7 L636.3,524.8 L643.6,525.1 L650.2,525.4 L652.4,524.9 L654.4,524.3 L656.3,523.7 L658.1,523.0 L657.8,521.9 L655.3,520.0 L653.7,518.2 L653.2,516.7 L653.7,515.5 L655.8,514.7 L658.5,514.1 L662.5,514.1 L667.0,514.3 L672.3,515.0 L677.9,515.9 L683.1,516.8 L685.4,516.4 L687.7,516.0 L689.9,515.6 L692.0,515.1 L693.0,513.9 L692.8,511.9 L693.2,510.0 L694.3,508.4 L695.9,507.2 L698.5,506.7 L701.2,506.3 L704.7,506.6 L708.2,507.2 L712.0,508.3 L715.8,509.7 L719.3,511.1 L721.6,510.9 L723.9,510.7 L726.2,510.4 L728.5,510.1 L730.6,509.0 L732.5,506.9 L734.7,505.1 L737.2,503.6 L739.9,502.5 L742.6,502.2 L745.4,502.0 L748.0,502.6 L750.4,503.5 L752.6,504.9 L754.5,506.7 L756.2,508.4 L758.4,508.4 L760.6,508.4 L762.9,508.3 L765.2,508.2 L768.1,507.2 L772.0,505.2 L775.8,503.6 L779.5,502.3 L782.9,501.4 L785.7,501.3 L788.3,501.4 L790.0,502.2 L791.3,503.3 L791.8,505.0 L791.6,506.9 L791.4,508.8 L793.4,509.0 L795.4,509.2 L797.5,509.3 L799.7,509.4 L803.3,508.7 L808.8,506.9 L814.1,505.5 L818.7,504.5 L822.8,503.9 L825.4,504.0 L827.7,504.3 L828.4,505.3 L828.4,506.6 L827.2,508.3 L825.0,510.4 L822.9,512.3 L824.5,512.7 L826.2,513.0 L827.9,513.4 L829.8,513.7Z M761.4,537.6 L763.1,538.1 L764.5,538.6 L765.8,539.3 L766.8,539.9 L767.6,540.6 L768.1,541.4 L768.4,542.1 L768.4,542.9 L768.2,543.8 L767.7,544.6 L766.9,545.4 L765.9,546.3 L764.7,547.1 L763.2,547.9 L761.4,548.6 L759.5,549.4 L757.4,550.1 L755.1,550.7 L752.7,551.3 L750.1,551.8 L747.5,552.2 L744.7,552.6 L742.0,552.8 L739.2,553.0 L736.4,553.2 L733.7,553.2 L731.1,553.1 L728.5,553.0 L726.1,552.7 L723.9,552.4 L721.8,552.0 L719.9,551.6 L718.3,551.0 L716.8,550.4 L715.6,549.8 L714.7,549.1 L714.0,548.3 L713.6,547.5 L713.5,546.7 L713.6,545.9 L714.0,545.1 L714.7,544.2 L715.6,543.4 L716.7,542.6 L718.1,541.8 L719.7,541.0 L721.5,540.3 L723.4,539.6 L725.5,539.0 L727.8,538.4 L730.2,537.9 L732.6,537.4 L735.2,537.0 L737.8,536.7 L740.4,536.4 L743.0,536.3 L745.6,536.2 L748.2,536.2 L750.7,536.2 L753.1,536.3 L755.4,536.5 L757.5,536.8 L759.5,537.2Z" fill="#6aa1c8" fill-rule="evenodd"/>
<path d="M544.0,354.9 L544.0,355.0 L568.3,572.5 L568.3,572.5 L568.3,572.5 L568.6,573.6 L568.6,573.6 L568.6,573.6 L570.0,574.4 L570.0,574.5 L570.0,574.5 L575.3,574.6 L575.3,574.6 L582.5,574.4 L582.5,574.4 L583.2,574.3 L583.2,574.3 L583.3,574.3 L583.3,574.3 L583.3,574.3 L583.3,574.3 L583.4,574.3 L583.4,574.4 L583.4,574.4 L583.4,574.4 L583.5,574.4 L583.5,574.4 L583.5,574.5 L583.5,574.5 L583.5,574.5 L583.5,574.5 L583.5,574.6 L585.0,588.1 L585.0,588.1 L585.0,588.1 L586.5,589.0 L586.5,589.0 L586.5,589.0 L589.1,589.6 L589.1,589.6 L589.1,589.6 L595.3,589.1 L595.3,589.1 L603.1,588.1 L603.1,588.0 L612.5,586.4 L612.5,586.3 L619.5,584.9 L619.6,584.9 L619.6,584.9 L619.6,584.9 L619.7,584.9 L619.7,584.9 L619.7,584.9 L619.7,584.9 L619.8,584.9 L619.8,584.9 L619.8,585.0 L619.8,585.0 L619.8,585.0 L619.9,585.0 L619.9,585.1 L619.9,585.1 L619.9,585.1 L619.9,585.2 L621.3,599.9 L621.3,599.9 L621.3,599.9 L624.1,600.5 L624.1,600.5 L624.1,600.5 L627.6,600.8 L627.6,600.8 L627.6,600.8 L633.9,599.6 L633.9,599.6 L641.3,597.7 L641.3,597.7 L649.7,595.1 L649.7,595.1 L658.5,592.0 L658.5,592.0 L663.8,590.7 L663.8,590.7 L663.9,590.7 L663.9,590.7 L666.6,590.8 L666.6,590.9 L669.3,591.1 L669.3,591.1 L669.8,591.2 L669.9,591.2 L669.9,591.2 L669.9,591.2 L669.9,591.2 L670.0,591.2 L670.0,591.2 L670.0,591.2 L670.0,591.3 L670.0,591.3 L670.1,591.3 L670.1,591.3 L670.1,591.4 L670.1,591.4 L670.1,591.4 L671.0,601.9 L671.0,601.9 L671.0,601.9 L672.0,604.1 L672.0,604.1 L672.0,604.1 L673.9,605.8 L673.9,605.8 L673.9,605.8 L677.5,606.0 L677.5,606.0 L681.5,605.8 L681.5,605.8 L681.6,605.8 L687.0,604.0 L687.0,604.0 L692.7,601.5 L692.8,601.5 L698.8,598.2 L698.8,598.2 L704.8,594.5 L704.8,594.5 L704.8,594.5 L709.0,592.8 L709.0,592.8 L709.1,592.8 L709.1,592.8 L712.1,592.6 L712.1,592.6 L715.2,592.5 L715.2,592.5 L718.2,592.5 L718.2,592.5 L721.0,592.6 L721.0,592.6 L721.0,592.6 L721.1,592.6 L721.1,592.6 L721.1,592.6 L721.1,592.6 L721.2,592.6 L721.2,592.6 L721.2,592.7 L721.2,592.7 L723.1,595.5 L723.1,595.5 L725.3,598.8 L725.4,598.8 L725.4,598.8 L728.2,601.6 L728.2,601.6 L728.2,601.6 L731.5,603.3 L731.5,603.3 L731.5,603.3 L735.2,604.5 L735.2,604.5 L735.2,604.5 L739.1,604.3 L739.1,604.3 L743.0,603.6 L743.0,603.6 L743.0,603.6 L746.7,601.4 L746.7,601.4 L746.7,601.4 L750.0,598.6 L750.0,598.6 L750.0,598.6 L752.9,595.2 L752.9,595.2 L752.9,595.2 L755.2,591.4 L755.2,591.4 L755.2,591.4 L755.2,591.4 L755.3,591.4 L757.7,589.5 L757.7,589.5 L757.7,589.5 L757.8,589.4 L757.8,589.4 L757.8,589.4 L760.7,588.9 L760.7,588.9 L763.7,588.5 L763.7,588.5 L766.6,588.2 L766.7,588.2 L769.6,587.9 L769.6,587.9 L769.7,587.9 L769.7,587.9 L769.7,587.9 L769.8,587.9 L774.6,590.1 L780.2,592.7 L780.2,592.7 L785.7,594.7 L785.7,594.7 L790.7,595.7 L790.8,595.7 L795.5,596.3 L795.5,596.3 L795.5,596.3 L799.1,595.7 L799.1,595.6 L802.3,594.7 L802.3,594.6 L802.3,594.6 L803.8,592.5 L803.8,592.4 L803.8,592.4 L804.4,589.8 L804.4,589.8 L804.4,589.7 L804.0,581.1 L804.0,581.1 L804.0,581.1 L804.0,581.1 L804.0,581.0 L804.0,581.0 L804.0,581.0 L804.0,580.9 L804.1,580.9 L804.1,580.9 L804.1,580.9 L804.1,580.9 L804.2,580.9 L804.2,580.8 L805.4,580.5 L805.4,580.5 L807.9,579.8 L807.9,579.8 L810.4,579.2 L810.4,579.2 L813.1,578.6 L813.1,578.6 L813.1,578.6 L813.2,578.6 L813.2,578.6 L820.1,580.0 L827.9,581.5 L827.9,581.5 L835.1,582.5 L835.2,582.5 L841.0,582.9 L841.0,582.9 L846.1,582.8 L846.1,582.8 L846.1,582.8 L848.9,581.9 L848.9,581.9 L848.9,581.9 L851.0,580.8 L851.0,580.8 L851.0,580.7 L850.5,566.9 L850.5,566.9 L850.5,566.8 L850.5,566.8 L850.5,566.8 L850.5,566.8 L850.6,566.7 L850.6,566.7 L850.6,566.7 L850.6,566.7 L850.6,566.7 L850.7,566.6 L850.7,566.6 L850.7,566.6 L850.7,566.6 L850.8,566.6 L850.8,566.6 L850.8,566.6 L854.1,566.8 L862.9,567.2 L862.9,567.2 L870.7,567.4 L870.7,567.4 L876.5,567.0 L876.5,567.0 L881.2,566.5 L881.2,566.5 L881.2,566.5 L882.9,565.5 L882.9,565.5 L883.0,565.4 L883.8,564.3 L883.8,564.3 L883.8,564.3 L883.5,552.1 L883.5,552.1 L883.5,552.1 L883.5,552.1 L883.5,552.0 L883.5,552.0 L883.6,552.0 L883.6,552.0 L883.6,551.9 L883.6,551.9 L883.6,551.9 L883.7,551.9 L883.7,551.9 L883.7,551.9 L883.8,551.8 L883.8,551.8 L889.8,551.3 L889.8,551.3 L894.9,550.5 L894.9,550.5 L898.7,549.6 L898.7,549.6 L898.7,549.6 L899.4,548.6 L899.4,548.6 L899.4,548.6 L899.1,534.4 L899.1,534.3 L899.1,534.3 L899.2,534.3 L899.2,534.3 L899.2,534.2 L899.2,534.2 L899.2,534.2 L899.2,534.2 L899.2,534.1 L899.3,534.1 L899.3,534.1 L899.3,534.1 L899.6,534.0 L899.6,534.0 L899.6,534.0 L895.9,341.9 L895.9,341.9 L895.9,341.9 L895.6,341.6 L895.6,341.6 L895.6,341.6 L894.4,341.3 L894.4,341.3 L894.4,341.3 L889.8,341.1 L889.8,341.1 L883.8,341.0 L883.8,341.0 L882.3,341.0 L882.3,341.0 L882.2,341.0 L882.2,341.0 L882.2,341.0 L882.2,341.0 L882.1,341.0 L882.1,341.0 L882.1,340.9 L882.1,340.9 L882.0,340.9 L882.0,340.9 L882.0,340.8 L882.0,340.8 L882.0,340.8 L882.0,340.8 L882.0,340.7 L881.9,337.7 L881.9,337.7 L881.9,337.7 L880.8,337.4 L880.7,337.4 L878.8,337.2 L878.8,337.2 L874.0,337.2 L874.0,337.2 L867.9,337.3 L867.9,337.3 L860.5,337.4 L856.4,337.6 L856.3,337.6 L856.3,337.6 L856.3,337.6 L856.2,337.6 L856.2,337.5 L856.2,337.5 L856.2,337.5 L856.1,337.5 L856.1,337.5 L856.1,337.4 L856.1,337.4 L856.1,337.4 L856.1,337.4 L856.1,337.3 L856.0,337.3 L856.0,337.3 L856.0,334.5 L856.0,334.5 L856.0,334.5 L854.1,334.3 L854.1,334.3 L851.6,334.2 L851.6,334.2 L847.0,334.3 L847.0,334.3 L841.3,334.5 L841.3,334.5 L834.7,334.9 L827.4,335.3 L827.4,335.3 L823.1,335.5 L823.1,335.5 L822.2,335.4 L822.1,335.4 L822.1,335.4 L822.1,335.4 L822.1,335.4 L822.0,335.4 L822.0,335.4 L822.0,335.3 L822.0,335.3 L821.9,335.3 L821.9,335.3 L821.9,335.2 L821.9,335.2 L821.9,335.2 L821.9,335.2 L821.9,335.1 L821.8,332.8 L821.8,332.8 L821.8,332.8 L821.1,332.5 L821.1,332.5 L821.1,332.5 L818.7,332.4 L818.7,332.4 L815.9,332.3 L815.9,332.3 L811.7,332.5 L811.7,332.5 L806.8,332.9 L806.8,332.9 L801.3,333.3 L801.3,333.3 L795.4,333.9 L795.4,333.9 L791.6,334.1 L791.6,334.1 L789.3,334.1 L789.3,334.1 L787.1,334.1 L787.1,334.1 L785.0,334.0 L785.0,334.0 L783.8,334.0 L783.8,334.0 L783.7,334.0 L783.7,334.0 L783.7,333.9 L783.6,333.9 L783.6,333.9 L783.6,333.9 L783.6,333.9 L783.6,333.9 L783.5,333.8 L783.5,333.8 L783.5,333.8 L783.5,333.7 L783.5,333.7 L783.5,333.7 L783.5,332.7 L783.5,332.7 L783.4,332.7 L783.0,332.2 L783.0,332.2 L783.0,332.2 L781.7,331.9 L781.7,331.9 L779.9,331.6 L779.9,331.6 L777.2,331.6 L777.2,331.6 L774.3,331.6 L774.3,331.6 L770.7,331.9 L770.7,331.9 L766.8,332.3 L766.8,332.3 L762.7,332.9 L762.7,332.9 L758.6,333.5 L758.6,333.5 L755.5,333.8 L755.4,333.8 L753.1,333.9 L753.1,333.9 L750.7,333.9 L750.7,333.9 L748.3,333.9 L748.3,333.9 L746.0,333.9 L746.0,333.9 L746.0,333.9 L746.0,333.9 L744.3,333.4 L742.4,332.8 L742.4,332.8 L740.2,332.3 L740.2,332.3 L737.7,332.1 L737.7,332.1 L735.0,331.9 L735.0,331.9 L732.1,331.9 L732.1,331.9 L729.2,332.0 L729.2,332.0 L726.4,332.4 L726.4,332.4 L723.7,332.9 L723.7,332.9 L721.3,333.4 L721.3,333.5 L719.2,334.1 L719.2,334.1 L719.1,334.1 L717.0,334.5 L716.9,334.5 L714.6,334.6 L714.6,334.6 L712.1,334.7 L712.1,334.7 L709.7,334.7 L709.7,334.7 L707.2,334.8 L707.2,334.8 L703.6,334.4 L699.7,333.9 L699.7,333.9 L695.8,333.6 L695.8,333.6 L692.1,333.4 L692.1,333.4 L688.6,333.3 L688.6,333.3 L685.6,333.4 L685.6,333.4 L682.9,333.6 L682.9,333.6 L682.9,333.6 L681.1,334.0 L681.1,334.0 L681.1,334.0 L679.9,334.5 L679.9,334.5 L679.9,334.5 L679.4,335.1 L679.4,335.1 L679.4,335.1 L679.4,335.6 L679.4,335.6 L679.4,335.6 L679.4,335.7 L679.4,335.7 L679.4,335.7 L679.4,335.7 L679.3,335.8 L679.3,335.8 L679.3,335.8 L679.3,335.8 L679.3,335.8 L679.2,335.9 L679.2,335.9 L678.4,336.1 L678.4,336.1 L678.4,336.2 L678.4,336.2 L676.1,336.3 L676.1,336.3 L673.8,336.5 L673.8,336.5 L671.4,336.6 L671.4,336.6 L669.0,336.7 L668.9,336.7 L663.6,336.4 L657.7,336.1 L657.7,336.1 L652.2,335.9 L652.2,335.9 L647.5,335.9 L647.5,335.9 L643.3,335.9 L643.3,335.9 L640.5,336.1 L640.5,336.1 L638.2,336.3 L638.1,336.3 L638.1,336.3 L637.6,336.7 L637.6,336.7 L637.6,336.7 L637.8,338.9 L637.8,338.9 L637.8,339.0 L637.8,339.0 L637.7,339.0 L637.7,339.0 L637.7,339.1 L637.7,339.1 L637.7,339.1 L637.7,339.1 L637.6,339.2 L637.6,339.2 L637.6,339.2 L637.6,339.2 L637.5,339.2 L637.5,339.2 L637.5,339.2 L636.2,339.3 L636.2,339.3 L633.9,339.5 L633.9,339.5 L626.9,339.4 L619.3,339.3 L612.4,339.3 L612.4,339.3 L606.9,339.4 L606.9,339.4 L602.2,339.5 L602.2,339.5 L599.7,339.8 L599.7,339.8 L597.9,340.1 L597.9,340.1 L597.9,340.1 L598.2,342.9 L598.2,342.9 L598.2,343.0 L598.2,343.0 L598.2,343.0 L598.2,343.1 L598.2,343.1 L598.2,343.1 L598.2,343.1 L598.1,343.2 L598.1,343.2 L598.1,343.2 L598.1,343.2 L598.0,343.2 L598.0,343.2 L598.0,343.2 L598.0,343.2 L597.9,343.2 L596.8,343.3 L587.8,343.4 L579.8,343.6 L579.8,343.6 L573.8,343.9 L573.8,343.9 L568.9,344.1 L568.9,344.1 L567.1,344.4 L567.1,344.4 L567.1,344.5 L566.1,344.8 L566.1,344.8 L566.1,344.8 L566.5,347.9 L566.5,347.9 L566.5,347.9 L566.5,347.9 L566.5,348.0 L566.4,348.0 L566.4,348.0 L566.4,348.0 L566.4,348.1 L566.4,348.1 L566.4,348.1 L566.3,348.1 L566.3,348.1 L566.3,348.2 L566.3,348.2 L566.2,348.2 L566.2,348.2 L566.2,348.2 L558.6,348.6 L558.6,348.6 L552.7,349.0 L552.7,349.0 L548.0,349.4 L548.0,349.4 L548.0,349.4 L547.1,349.8 L547.0,349.8 L547.0,349.8 L547.5,354.1 L547.5,354.2 L547.5,354.2 L547.5,354.2 L547.5,354.3 L547.5,354.3 L547.5,354.3 L547.5,354.3 L547.5,354.4 L547.4,354.4 L547.4,354.4 L547.4,354.4 L547.4,354.4 L547.4,354.4 L547.3,354.5 L547.3,354.5 L547.3,354.5 L544.0,354.9 L544.0,354.9Z" fill="#4caf50" fill-opacity="0.45" fill-rule="evenodd"/>
<path d="M679.5,335.8 L679.4,335.1 L679.4,335.8 L679.5,335.8ZM693.2,510.0 L694.3,508.4 L695.9,507.2 L698.5,506.7 L701.2,506.3 L704.7,506.6 L708.2,507.2 L712.0,508.3 L715.8,509.7 L719.3,511.1 L721.6,510.9 L723.9,510.7 L726.2,510.4 L728.5,510.1 L730.6,509.0 L732.5,506.9 L734.7,505.1 L737.2,503.6 L739.9,502.5 L742.6,502.2 L745.4,502.0 L748.0,502.6 L750.4,503.5 L752.6,504.9 L754.5,506.7 L756.2,508.4 L758.4,508.4 L760.6,508.4 L762.9,508.3 L765.0,508.2 L765.0,360.8 L762.1,360.4 L757.0,359.7 L753.7,359.8 L750.5,359.9 L747.4,360.0 L744.2,360.2 L741.4,360.8 L738.8,362.1 L735.6,363.3 L731.9,364.2 L727.8,364.9 L723.6,365.1 L719.5,365.2 L715.6,364.8 L712.1,364.3 L709.3,363.4 L707.0,362.3 L705.1,361.3 L701.9,361.3 L698.7,361.3 L695.5,361.3 L692.2,361.4 L687.6,362.0 L681.5,363.1 L692.8,511.9 L693.2,510.0Z" fill="url(#g32)" fill-opacity="0.2" fill-rule="evenodd"/>
<path d="M679.4,335.1 L692.8,511.9 L693.0,513.9 L679.5,335.8 L679.4,335.1Z" fill="url(#g49)" fill-opacity="0.2" fill-rule="evenodd"/>
<path d="M638.4,339.1 L640.4,339.0 L642.3,338.7 L642.1,338.4 L639.6,337.8 L638.0,337.2 L637.6,336.7 L637.8,339.2 L638.4,339.1ZM653.7,515.5 L655.8,514.7 L658.5,514.1 L662.5,514.1 L667.0,514.3 L672.3,515.0 L677.9,515.9 L683.1,516.8 L685.4,516.4 L687.7,516.0 L689.9,515.6 L692.0,515.1 L693.0,513.9 L681.6,363.1 L681.0,363.2 L674.3,364.3 L668.0,365.1 L662.1,365.7 L657.8,365.8 L654.0,365.8 L652.1,365.2 L651.1,364.5 L651.7,363.4 L653.6,362.2 L655.3,361.1 L652.7,361.0 L650.0,360.9 L647.1,360.8 L644.2,360.8 L639.7,361.1 L653.2,516.7 L653.7,515.5Z" fill="url(#g31)" fill-opacity="0.2" fill-rule="evenodd"/>
<path d="M642.1,338.4 L639.6,337.8 L638.0,337.2 L637.6,336.7 L653.2,516.7 L653.7,518.2 L655.3,520.0 L657.8,521.9 L658.1,523.0 L642.3,338.7 L642.1,338.4Z" fill="url(#g48)" fill-opacity="0.2" fill-rule="evenodd"/>
<path d="M605.0,343.1 L606.9,342.9 L608.7,342.7 L610.2,342.4 L611.6,342.2 L610.0,341.8 L604.9,341.4 L601.1,340.9 L598.8,340.5 L597.9,340.1 L598.2,343.2 L605.0,343.1ZM600.2,362.5 L604.3,361.4 L609.8,360.2 L614.8,359.2 L613.2,359.0 L611.3,358.8 L609.3,358.6 L607.1,358.5 L601.0,358.7 L599.8,358.8 L600.1,362.5 L600.2,362.5ZM617.7,526.1 L620.0,525.3 L624.5,524.9 L629.7,524.7 L636.3,524.8 L643.6,525.1 L650.2,525.4 L652.4,524.9 L654.4,524.3 L656.3,523.7 L658.1,523.0 L644.2,360.8 L644.2,360.8 L638.4,361.2 L628.8,362.2 L619.7,363.1 L611.7,363.8 L604.9,364.2 L601.2,364.1 L600.3,364.0 L616.1,527.0 L617.7,526.1Z" fill="url(#g30)" fill-opacity="0.2" fill-rule="evenodd"/>
<path d="M610.0,341.8 L604.9,341.4 L601.1,340.9 L598.8,340.5 L597.9,340.1 L616.1,527.0 L617.0,528.2 L619.3,529.5 L623.0,531.0 L628.0,532.5 L629.6,533.5 L611.6,342.2 L610.0,341.8Z" fill="url(#g47)" fill-opacity="0.2" fill-rule="evenodd"/>
<path d="M567.1,348.1 L576.9,347.7 L585.8,347.3 L587.1,347.0 L588.1,346.8 L589.0,346.5 L589.7,346.2 L586.6,346.0 L579.0,345.7 L572.9,345.4 L568.6,345.1 L566.1,344.8 L566.5,348.2 L567.1,348.1ZM570.8,352.4 L579.5,351.7 L580.0,351.4 L580.2,351.1 L580.1,350.9 L579.9,350.6 L575.4,350.5 L566.7,350.5 L567.0,352.7 L570.8,352.4ZM573.2,357.8 L581.5,356.8 L588.9,355.9 L588.3,355.6 L587.5,355.3 L586.5,355.1 L585.2,354.9 L579.7,354.9 L568.6,355.3 L567.3,355.3 L567.6,358.5 L573.2,357.8ZM587.7,540.4 L589.4,539.4 L594.0,538.6 L599.6,537.8 L607.2,537.3 L615.7,536.8 L623.5,536.5 L625.3,535.7 L626.9,535.0 L628.3,534.3 L629.6,533.5 L613.6,363.6 L611.7,363.8 L604.9,364.2 L601.2,364.1 L598.3,363.9 L598.6,363.3 L600.2,362.5 L604.3,361.4 L609.8,360.2 L613.3,359.5 L613.2,359.0 L613.2,359.0 L611.3,358.8 L609.3,358.6 L607.1,358.5 L601.0,358.7 L589.9,359.4 L579.8,360.0 L571.4,360.4 L567.8,360.5 L586.9,541.4 L587.7,540.4Z" fill="url(#g29)" fill-opacity="0.2" fill-rule="evenodd"/>
<path d="M586.6,346.0 L579.0,345.7 L572.9,345.4 L568.6,345.1 L566.1,344.8 L586.9,541.4 L589.4,542.4 L593.4,543.4 L599.4,544.3 L606.6,545.2 L609.6,546.0 L589.7,346.2 L586.6,346.0Z" fill="url(#g46)" fill-opacity="0.2" fill-rule="evenodd"/>
<path d="M547.8,354.4 L553.1,353.8 L561.2,353.1 L570.8,352.4 L579.5,351.7 L580.0,351.4 L580.2,351.1 L580.1,350.9 L579.9,350.6 L575.4,350.5 L565.7,350.5 L557.5,350.5 L551.4,350.3 L547.2,350.1 L547.0,349.8 L547.6,354.4 L547.8,354.4ZM570.8,555.6 L575.1,554.3 L580.7,553.1 L588.6,551.7 L597.8,550.4 L606.1,549.3 L607.3,548.4 L608.2,547.6 L609.0,546.8 L609.6,546.0 L591.0,359.3 L589.9,359.4 L579.8,360.0 L571.4,360.4 L564.7,360.5 L562.0,360.3 L560.4,360.0 L562.7,359.4 L566.6,358.7 L573.2,357.8 L581.5,356.8 L588.9,355.9 L588.3,355.6 L587.5,355.3 L586.5,355.1 L585.2,354.9 L579.7,354.9 L568.6,355.3 L558.9,355.5 L551.3,355.6 L547.7,355.6 L570.0,556.7 L570.8,555.6Z" fill="url(#g28)" fill-opacity="0.2" fill-rule="evenodd"/>
<path d="M579.9,350.6 L575.4,350.5 L565.7,350.5 L557.5,350.5 L551.4,350.3 L547.2,350.1 L547.0,349.8 L570.0,556.7 L570.2,557.7 L574.2,558.3 L580.0,558.8 L587.8,559.0 L597.0,559.0 L601.3,559.4 L601.5,560.2 L580.1,350.9 L579.9,350.6Z" fill="url(#g45)" fill-opacity="0.2" fill-rule="evenodd"/>
<path d="M571.8,570.9 L576.6,569.1 L584.1,567.0 L593.1,564.8 L601.1,562.8 L601.5,561.9 L601.6,561.0 L601.5,560.2 L581.1,359.9 L579.8,360.0 L571.4,360.4 L564.7,360.5 L562.0,360.3 L560.4,360.0 L562.7,359.4 L566.6,358.7 L573.2,357.8 L580.8,356.9 L580.6,354.9 L579.7,354.9 L568.6,355.3 L558.9,355.5 L551.3,355.6 L545.6,355.6 L544.2,355.3 L544.0,354.9 L568.3,572.5 L571.8,570.9Z" fill="url(#g27)" fill-opacity="0.2" fill-rule="evenodd"/>
<path d="M588.3,355.6 L587.5,355.3 L586.5,355.1 L585.2,354.9 L579.7,354.9 L568.6,355.3 L558.9,355.5 L551.3,355.6 L545.6,355.6 L544.2,355.3 L544.0,354.9 L568.3,572.5 L568.6,573.6 L570.0,574.5 L575.3,574.6 L582.5,574.4 L591.6,573.7 L602.0,572.6 L607.2,572.5 L608.4,573.2 L609.4,573.9 L610.3,574.7 L610.9,575.5 L588.9,355.9 L588.3,355.6Z" fill="url(#g44)" fill-opacity="0.2" fill-rule="evenodd"/>
<path d="M587.0,586.2 L590.5,584.0 L596.5,581.2 L604.1,578.2 L610.9,575.5 L589.3,359.5 L579.8,360.0 L571.4,360.4 L564.7,360.5 L562.0,360.3 L560.4,360.0 L585.0,588.1 L587.0,586.2Z" fill="url(#g26)" fill-opacity="0.2" fill-rule="evenodd"/>
<path d="M613.2,359.0 L611.3,358.8 L609.3,358.6 L607.1,358.5 L601.0,358.7 L589.9,359.4 L579.8,360.0 L571.4,360.4 L564.7,360.5 L562.0,360.3 L560.4,360.0 L585.0,588.1 L586.5,589.0 L589.1,589.6 L595.3,589.1 L603.1,588.1 L612.5,586.4 L622.8,584.2 L628.5,583.5 L630.6,584.0 L632.6,584.5 L634.3,585.1 L636.0,585.8 L614.8,359.2 L613.2,359.0Z" fill="url(#g43)" fill-opacity="0.2" fill-rule="evenodd"/>
<path d="M621.5,598.0 L622.9,595.7 L626.5,592.5 L631.5,588.9 L636.0,585.8 L615.2,363.5 L611.7,363.8 L604.9,364.2 L601.2,364.1 L598.3,363.9 L621.3,599.9 L621.5,598.0Z" fill="url(#g25)" fill-opacity="0.2" fill-rule="evenodd"/>
<path d="M652.7,361.0 L650.0,360.9 L647.1,360.8 L644.2,360.8 L638.4,361.2 L628.8,362.2 L619.7,363.1 L611.7,363.8 L604.9,364.2 L601.2,364.1 L598.3,363.9 L621.3,599.9 L624.1,600.5 L627.6,600.8 L633.9,599.6 L641.3,597.7 L649.7,595.1 L658.5,592.0 L663.8,590.7 L666.6,590.9 L669.3,591.1 L671.9,591.4 L674.3,591.8 L655.3,361.1 L652.7,361.0Z" fill="url(#g42)" fill-opacity="0.2" fill-rule="evenodd"/>
<path d="M762.1,360.4 L757.0,359.7 L753.7,359.8 L750.5,359.9 L747.4,360.0 L744.2,360.2 L741.4,360.8 L738.8,362.1 L735.6,363.3 L731.9,364.2 L727.8,364.9 L723.6,365.1 L719.5,365.2 L715.6,364.8 L712.1,364.3 L709.3,363.4 L707.0,362.3 L705.1,361.3 L701.9,361.3 L698.7,361.3 L695.5,361.3 L692.2,361.4 L687.6,362.0 L681.0,363.2 L674.3,364.3 L668.0,365.1 L662.1,365.7 L657.8,365.8 L654.0,365.8 L652.1,365.2 L651.1,364.5 L671.0,601.9 L672.0,604.1 L673.9,605.8 L677.5,606.0 L681.5,605.8 L687.0,604.0 L692.8,601.5 L698.8,598.2 L704.8,594.5 L709.0,592.8 L712.1,592.6 L715.2,592.5 L718.2,592.5 L721.1,592.6 L723.1,595.5 L725.4,598.8 L728.2,601.6 L731.5,603.3 L735.2,604.5 L739.1,604.3 L743.0,603.6 L746.7,601.4 L750.0,598.6 L752.9,595.2 L755.2,591.4 L757.8,589.4 L760.7,588.9 L763.7,588.5 L765.0,588.4 L765.0,360.8 L762.1,360.4Z" fill="url(#g41)" fill-opacity="0.2" fill-rule="evenodd"/>
<path d="M671.4,598.8 L672.9,595.1 L674.3,591.8 L655.7,365.8 L654.0,365.8 L652.1,365.2 L651.1,364.5 L671.0,601.9 L671.4,598.8Z" fill="url(#g24)" fill-opacity="0.2" fill-rule="evenodd"/>
<path d="M783.2,333.4 L783.0,333.9 L791.4,508.8 L791.6,506.9 L791.8,505.0 L783.5,332.7 L783.2,333.4Z" fill="url(#g50)" fill-opacity="0.08" fill-rule="evenodd"/>
<path d="M821.8,333.2 L820.4,333.8 L818.1,334.4 L815.9,335.0 L822.9,512.3 L825.0,510.4 L827.2,508.3 L828.4,506.6 L828.4,505.3 L821.8,332.8 L821.8,333.2Z" fill="url(#g51)" fill-opacity="0.08" fill-rule="evenodd"/>
<path d="M855.6,334.9 L854.2,335.3 L851.0,335.9 L846.5,336.5 L842.4,337.1 L848.4,518.8 L852.3,517.0 L856.5,515.1 L859.5,513.3 L860.8,512.0 L861.1,510.9 L856.0,334.5 L855.6,334.9Z" fill="url(#g35)" fill-opacity="0.08" fill-rule="evenodd"/>
<path d="M880.3,338.0 L877.5,338.5 L872.5,339.0 L866.1,339.5 L860.2,340.0 L865.5,528.1 L871.1,526.6 L877.2,524.9 L881.9,523.3 L884.5,522.0 L886.1,520.9 L881.9,337.7 L880.3,338.0Z" fill="url(#g36)" fill-opacity="0.08" fill-rule="evenodd"/>
<path d="M893.0,342.2 L888.9,342.6 L882.3,343.0 L874.2,343.4 L866.9,343.8 L866.4,344.0 L866.2,344.3 L866.2,344.5 L871.4,542.1 L871.5,541.3 L871.7,540.5 L872.1,539.7 L879.0,538.6 L886.7,537.4 L892.9,536.2 L896.8,535.1 L899.6,534.0 L895.9,341.9 L893.0,342.2Z" fill="url(#g37)" fill-opacity="0.08" fill-rule="evenodd"/>
<path d="M894.9,346.9 L890.8,347.2 L885.4,347.5 L877.6,347.7 L868.5,347.9 L860.2,348.0 L858.9,348.3 L857.7,348.6 L856.8,348.9 L856.1,349.1 L862.1,556.2 L862.8,555.4 L863.7,554.5 L864.8,553.7 L866.0,552.8 L873.8,552.4 L882.5,552.0 L889.8,551.3 L894.9,550.5 L898.7,549.6 L899.4,548.6 L895.6,346.6 L894.9,346.9Z" fill="url(#g38)" fill-opacity="0.08" fill-rule="evenodd"/>
<path d="M877.9,352.1 L876.0,352.5 L871.0,352.7 L864.8,352.8 L856.6,352.7 L847.3,352.6 L838.9,352.5 L836.7,352.7 L834.7,353.0 L832.9,353.3 L831.1,353.5 L838.9,569.6 L840.5,568.7 L842.3,567.9 L844.1,567.1 L846.2,566.3 L854.1,566.8 L862.9,567.2 L870.7,567.4 L876.5,567.0 L881.2,566.5 L882.9,565.5 L883.8,564.3 L878.8,351.7 L877.9,352.1Z" fill="url(#g39)" fill-opacity="0.08" fill-rule="evenodd"/>
<path d="M841.4,357.6 L838.4,357.9 L833.0,357.9 L826.8,357.8 L819.1,357.5 L810.9,357.0 L803.5,356.5 L800.6,356.7 L797.9,356.9 L795.2,357.2 L792.6,357.4 L791.9,358.0 L802.4,583.1 L803.0,581.2 L805.4,580.5 L807.9,579.8 L810.4,579.2 L813.1,578.6 L820.1,580.0 L827.9,581.5 L835.1,582.5 L841.0,582.9 L846.1,582.8 L848.9,581.9 L851.0,580.8 L843.6,357.2 L841.4,357.6Z" fill="url(#g40)" fill-opacity="0.08" fill-rule="evenodd"/>
<path d="M793.1,361.1 L791.4,361.8 L788.0,362.2 L784.2,362.4 L779.1,362.2 L773.8,361.9 L767.9,361.2 L765.0,360.8 L765.0,588.4 L766.7,588.2 L769.7,587.9 L774.6,590.1 L780.2,592.7 L785.7,594.7 L790.7,595.7 L795.5,596.3 L799.1,595.6 L802.3,594.6 L803.8,592.4 L804.4,589.8 L793.8,360.2 L793.1,361.1Z" fill="url(#g41)" fill-opacity="0.08" fill-rule="evenodd"/>
<path d="M748.3,343.1 L746.2,343.0 L744.0,342.9 L741.5,342.9 L739.0,342.8 L736.4,342.8 L733.7,342.8 L731.0,342.9 L728.2,342.9 L725.4,343.0 L722.7,343.1 L720.0,343.3 L717.4,343.4 L714.8,343.6 L712.4,343.8 L710.2,344.0 L708.1,344.2 L706.1,344.4 L704.4,344.7 L702.9,345.0 L701.7,345.2 L700.7,345.5 L700.0,345.8 L699.5,346.0 L699.3,346.3 L713.5,546.7 L713.6,547.5 L714.0,548.3 L714.7,549.1 L715.6,549.8 L716.8,550.4 L718.3,551.0 L719.9,551.6 L721.8,552.0 L723.9,552.4 L726.1,552.7 L728.5,553.0 L731.1,553.1 L733.7,553.2 L736.4,553.2 L739.2,553.0 L742.0,552.8 L744.7,552.6 L747.5,552.2 L750.1,551.8 L752.7,551.3 L755.1,550.7 L757.4,550.1 L759.5,549.4 L761.4,548.6 L763.2,547.9 L764.7,547.1 L765.9,546.3 L766.9,545.4 L767.7,544.6 L768.2,543.8 L768.4,542.9 L768.4,542.1 L768.4,542.1 L757.5,344.7 L757.2,344.5 L756.7,344.2 L755.9,344.0 L754.8,343.8 L753.5,343.6 L752.0,343.4 L750.3,343.3 L748.3,343.1Z" fill="#5fb563" fill-opacity="0.15"/>
<polygon points="761.4,537.6 763.1,538.1 764.5,538.6 765.8,539.3 766.8,539.9 767.6,540.6 768.1,541.4 768.4,542.1 768.4,542.9 768.2,543.8 767.7,544.6 766.9,545.4 765.9,546.3 764.7,547.1 763.2,547.9 761.4,548.6 759.5,549.4 757.4,550.1 755.1,550.7 752.7,551.3 750.1,551.8 747.5,552.2 744.7,552.6 742.0,552.8 739.2,553.0 736.4,553.2 733.7,553.2 731.1,553.1 728.5,553.0 726.1,552.7 723.9,552.4 721.8,552.0 719.9,551.6 718.3,551.0 716.8,550.4 715.6,549.8 714.7,549.1 714.0,548.3 713.6,547.5 713.5,546.7 713.6,545.9 714.0,545.1 714.7,544.2 715.6,543.4 716.7,542.6 718.1,541.8 719.7,541.0 721.5,540.3 723.4,539.6 725.5,539.0 727.8,538.4 730.2,537.9 732.6,537.4 735.2,537.0 737.8,536.7 740.4,536.4 743.0,536.3 745.6,536.2 748.2,536.2 750.7,536.2 753.1,536.3 755.4,536.5 757.5,536.8 759.5,537.2" fill="url(#holeg)" fill-opacity="0.9" stroke="#7fb07a" stroke-width="0.6"/>
<polygon points="725.2,344 733.2,344 726.4,224.6 718.3,224.6" fill="#4ddc55"/><path d="M719.4,174.2 L746.1,223.9 Q721.8,226 697.5,223.5 Z" fill="#1ecf24"/>
<polygon points="1461.8,573.9 1486.3,517.6 1503.3,398.9 1481.5,431.0" fill="#8fc296"/>
<polygon points="1190.9,403.2 1255.5,379.9 1309.0,384.0 1252.2,409.0" fill="#a8d4ac"/>
<polygon points="1401.5,423.3 1436.6,393.8 1503.3,398.9 1481.5,431.0" fill="#a8d4ac"/>
<path d="M1277.3,399.2 L1274.5,398.9 L1274.4,400.5 L1271.4,400.2 L1271.4,401.8 L1268.4,401.6 L1268.3,403.2 L1265.3,402.9 L1265.2,404.6 L1262.1,404.3 L1262.0,406.1 L1258.9,405.8 L1258.8,407.5 L1255.6,407.2 L1255.5,409.0 L1252.2,408.7 L1252.0,413.2 L1252.1,417.7 L1252.5,422.2 L1253.3,426.6 L1254.3,431.0 L1255.6,435.3 L1257.2,439.6 L1259.1,443.7 L1261.2,447.7 L1263.7,451.6 L1266.4,455.4 L1269.3,458.9 L1272.5,462.4 L1275.9,465.6 L1279.5,468.6 L1283.3,471.4 L1287.3,473.9 L1291.5,476.3 L1295.9,478.3 L1300.4,480.1 L1305.0,481.7 L1309.7,482.9 L1314.5,483.9 L1319.3,484.6 L1324.3,484.9 L1329.2,485.0 L1334.2,484.8 L1339.1,484.2 L1344.0,483.3 L1348.8,482.2 L1353.6,480.7 L1358.2,478.9 L1362.8,476.8 L1367.1,474.5 L1371.3,471.8 L1375.4,468.9 L1379.2,465.7 L1381.2,463.8 L1381.4,463.5 L1383.4,461.6 L1383.7,461.4 L1385.6,459.5 L1385.9,459.3 L1387.8,457.5 L1388.0,457.3 L1389.9,455.5 L1390.1,455.3 L1392.0,453.5 L1392.2,453.3 L1394.0,451.6 L1394.2,451.4 L1396.0,449.7 L1396.2,449.5 L1398.0,447.8 L1398.2,447.6 L1399.9,446.0 L1400.1,445.8 L1401.8,444.2 L1402.0,444.0 L1403.6,442.5 L1403.8,442.3 L1405.4,440.7 L1405.6,440.6 L1407.2,439.1 L1407.4,438.9 L1408.9,437.4 L1409.2,437.2 L1410.7,435.8 L1410.9,435.6 L1412.4,434.2 L1412.6,434.0 L1414.0,432.6 L1414.2,432.4 L1415.6,431.0 L1415.8,430.9 L1417.2,429.5 L1417.4,429.4 L1414.2,432.1 L1410.8,434.6 L1407.2,436.9 L1403.4,439.0 L1399.6,440.8 L1395.6,442.4 L1391.5,443.7 L1387.4,444.8 L1383.2,445.6 L1379.0,446.2 L1374.8,446.5 L1370.5,446.5 L1366.3,446.3 L1362.1,445.8 L1358.0,445.1 L1354.0,444.2 L1350.0,443.0 L1346.2,441.5 L1342.4,439.9 L1338.8,438.0 L1335.4,435.9 L1332.1,433.7 L1329.0,431.2 L1326.1,428.5 L1323.4,425.7 L1320.9,422.8 L1318.6,419.7 L1316.5,416.4 L1314.7,413.1 L1313.1,409.6 L1311.7,406.1 L1310.6,402.4 L1309.8,398.8 L1309.2,395.0 L1308.9,391.3 L1308.8,387.5 L1309.0,384.9 L1306.6,384.7 L1306.6,386.0 L1304.2,385.8 L1304.1,387.1 L1301.7,386.9 L1301.7,388.2 L1299.2,388.0 L1299.1,389.3 L1296.6,389.1 L1296.6,390.5 L1294.0,390.3 L1294.0,391.7 L1291.4,391.5 L1291.3,392.9 L1288.7,392.6 L1288.6,394.1 L1285.9,393.9 L1285.9,395.3 L1283.1,395.1 L1283.1,396.6 L1280.3,396.3 L1280.2,397.9 L1277.4,397.6 L1277.3,399.2Z" fill="#5ba7b6"/>
<polygon points="1183.6,524.6 1461.8,573.9 1481.5,431.0 1401.5,422.9 1400.8,427.8 1399.7,432.6 1398.2,437.3 1396.4,441.9 1394.3,446.3 1391.8,450.6 1389.1,454.7 1386.0,458.6 1382.7,462.3 1379.2,465.7 1375.4,468.9 1371.3,471.8 1367.1,474.5 1362.8,476.8 1358.2,478.9 1353.6,480.7 1348.8,482.2 1344.0,483.3 1339.1,484.2 1334.2,484.8 1329.2,485.0 1324.3,484.9 1319.3,484.6 1314.5,483.9 1309.7,482.9 1305.0,481.7 1300.4,480.1 1295.9,478.3 1291.5,476.3 1287.3,473.9 1283.3,471.4 1279.5,468.6 1275.9,465.6 1272.5,462.4 1269.3,458.9 1266.4,455.4 1263.7,451.6 1261.2,447.7 1259.1,443.7 1257.2,439.6 1255.6,435.3 1254.3,431.0 1253.3,426.6 1252.5,422.2 1252.1,417.7 1252.0,413.2 1252.2,408.7 1190.9,403.2" fill="#5aa8b5" stroke="#5bbde6" stroke-width="1"/>
<path d="M1401.9,418.2 L1401.9,413.3 L1401.6,408.5 L1400.9,403.7 L1399.9,398.9 L1398.5,394.2 L1396.8,389.6 L1394.8,385.2 L1392.4,380.8 L1389.8,376.7 L1386.8,372.7 L1383.6,368.9 L1380.1,365.3 L1376.3,362.0 L1372.4,358.9 L1368.2,356.1 L1363.9,353.5 L1359.3,351.3 L1354.7,349.3 L1349.9,347.6 L1345.1,346.3 L1340.2,345.3 L1335.2,344.5 L1330.2,344.1 L1325.2,344.0 L1320.3,344.2 L1315.3,344.7 L1310.5,345.6 L1305.7,346.7 L1301.1,348.1 L1296.5,349.8 L1292.1,351.7 L1287.9,353.9 L1283.8,356.4 L1280.0,359.1 L1276.3,362.0 L1272.9,365.1 L1269.7,368.4 L1266.7,371.9 L1264.0,375.5 L1261.5,379.3 L1259.3,383.3 L1257.4,387.3 L1255.8,391.5 L1254.4,395.7 L1253.4,400.0 L1252.6,404.4 L1252.1,408.7 L1252.2,408.7 L1255.5,409.0 L1255.6,407.2 L1258.8,407.5 L1258.9,405.8 L1262.0,406.1 L1262.1,404.3 L1265.2,404.6 L1265.3,402.9 L1268.3,403.2 L1268.4,401.6 L1271.4,401.8 L1271.4,400.2 L1274.4,400.5 L1274.5,398.9 L1277.3,399.2 L1277.4,397.6 L1280.2,397.9 L1280.3,396.3 L1283.1,396.6 L1283.1,395.1 L1285.9,395.3 L1285.9,393.9 L1288.6,394.1 L1288.7,392.6 L1291.3,392.9 L1291.4,391.5 L1294.0,391.7 L1294.0,390.3 L1296.6,390.5 L1296.6,389.1 L1299.1,389.3 L1299.2,388.0 L1301.7,388.2 L1301.7,386.9 L1304.1,387.1 L1304.2,385.8 L1306.6,386.0 L1306.6,384.7 L1309.0,384.9 L1308.8,387.5 L1308.9,391.3 L1309.2,395.0 L1309.8,398.8 L1310.6,402.4 L1311.7,406.1 L1313.1,409.6 L1314.7,413.1 L1316.5,416.4 L1318.6,419.7 L1320.9,422.8 L1323.4,425.7 L1326.1,428.5 L1329.0,431.2 L1332.1,433.7 L1335.4,435.9 L1338.8,438.0 L1342.4,439.9 L1346.2,441.5 L1350.0,443.0 L1354.0,444.2 L1358.0,445.1 L1362.1,445.8 L1366.3,446.3 L1370.5,446.5 L1374.8,446.5 L1379.0,446.2 L1383.2,445.6 L1387.4,444.8 L1391.5,443.7 L1395.6,442.4 L1396.3,442.1 L1396.5,441.6 L1398.3,437.1 L1399.7,432.4 L1400.8,427.7 L1401.5,423.0 L1401.9,418.2Z" fill="#3d98d8" fill-opacity="0.66"/>
<path d="M1252.1,408.7 L1251.9,413.1 L1252.0,417.5 L1252.4,421.9 L1253.1,426.3 L1254.1,430.6 L1255.3,434.8 L1256.9,439.0 L1258.7,443.1 L1260.7,447.0 L1263.1,450.9 L1265.6,454.6 L1268.5,458.1 L1271.5,461.5 L1274.8,464.7 L1278.3,467.7 L1282.0,470.5 L1285.8,473.1 L1289.9,475.5 L1294.1,477.6 L1298.4,479.5 L1302.9,481.1 L1307.4,482.4 L1312.1,483.5 L1316.8,484.3 L1321.6,484.8 L1326.5,485.1 L1331.3,485.0 L1336.2,484.6 L1341.0,484.0 L1345.7,483.0 L1350.5,481.7 L1353.6,480.7 L1348.8,482.2 L1344.0,483.3 L1339.1,484.2 L1334.2,484.8 L1329.2,485.0 L1324.3,484.9 L1319.3,484.6 L1314.5,483.9 L1309.7,482.9 L1305.0,481.7 L1300.4,480.1 L1295.9,478.3 L1291.5,476.3 L1287.3,473.9 L1283.3,471.4 L1279.5,468.6 L1275.9,465.6 L1272.5,462.4 L1269.3,458.9 L1266.4,455.4 L1263.7,451.6 L1261.2,447.7 L1259.1,443.7 L1257.2,439.6 L1255.6,435.3 L1254.3,431.0 L1253.3,426.6 L1252.5,422.2 L1252.1,417.7 L1252.0,413.2 L1252.2,408.7 L1252.1,408.7 L1252.1,408.7ZM1355.1,480.2 L1358.0,479.0 L1353.6,480.7 L1355.1,480.2ZM1359.6,478.4 L1362.4,477.0 L1358.3,478.9 L1359.6,478.4ZM1364.0,476.2 L1366.6,474.8 L1362.9,476.8 L1364.0,476.2ZM1368.2,473.8 L1370.6,472.3 L1367.4,474.3 L1368.2,473.8ZM1372.3,471.2 L1374.4,469.6 L1371.6,471.6 L1372.3,471.2ZM1376.2,468.2 L1377.9,466.7 L1375.7,468.6 L1376.2,468.2ZM1379.9,465.1 L1381.3,463.6 L1379.5,465.4 L1379.9,465.1ZM1383.3,461.6 L1384.4,460.4 L1383.0,461.9 L1383.3,461.6ZM1386.5,458.0 L1387.2,457.1 L1386.4,458.2 L1386.5,458.0ZM1389.4,454.2 L1389.7,453.7 L1389.4,454.2 L1389.4,454.2Z" fill="#4aa8e8" fill-opacity="0.12"/>
<polygon points="1401.5,423.0 1401.9,418.2 1401.9,413.3 1401.6,408.5 1400.9,403.7 1399.9,398.9 1398.5,394.2 1396.8,389.6 1394.8,385.2 1392.4,380.8 1389.8,376.7 1386.8,372.7 1383.6,368.9 1380.1,365.3 1376.3,362.0 1372.4,358.9 1368.2,356.1 1363.9,353.5 1359.3,351.3 1354.7,349.3 1349.9,347.6 1345.1,346.3 1340.2,345.3 1335.2,344.5 1330.2,344.1 1325.2,344.0 1320.3,344.2 1315.3,344.7 1310.5,345.6 1305.7,346.7 1301.1,348.1 1296.5,349.8 1292.1,351.7 1287.9,353.9 1283.8,356.4 1280.0,359.1 1276.3,362.0 1272.9,365.1 1269.7,368.4 1266.7,371.9 1264.0,375.5 1261.5,379.3 1259.3,383.3 1257.4,387.3 1255.8,391.5 1254.4,395.7 1253.4,400.0 1252.6,404.4 1252.1,408.7 1251.9,413.1 1252.0,417.5 1252.4,421.9 1253.1,426.3 1254.1,430.6 1255.3,434.8 1256.9,439.0 1258.7,443.1 1260.7,447.0 1263.1,450.9 1265.6,454.6 1268.5,458.1 1271.5,461.5 1274.8,464.7 1278.3,467.7 1282.0,470.5 1285.8,473.1 1289.9,475.5 1294.1,477.6 1298.4,479.5 1302.9,481.1 1307.4,482.4 1312.1,483.5 1316.8,484.3 1321.6,484.8 1326.5,485.1 1331.3,485.0 1336.2,484.6 1341.0,484.0 1345.7,483.0 1350.5,481.7 1355.1,480.2 1359.6,478.4 1364.0,476.2 1368.2,473.8 1372.3,471.2 1376.2,468.2 1379.9,465.1 1383.3,461.6 1386.5,458.0 1389.4,454.2 1392.1,450.1 1394.5,445.9 1396.5,441.6 1398.3,437.1 1399.7,432.4 1400.8,427.7" fill="none" stroke="#4d6677" stroke-width="0.9"/>
<polygon points="1235.9,474.7 1235.9,473.2 1235.7,471.6 1235.3,470.1 1234.7,468.6 1234.0,467.2 1233.0,465.9 1231.9,464.7 1230.6,463.6 1229.3,462.8 1227.8,462.1 1226.3,461.6 1224.7,461.3 1223.2,461.1 1221.6,461.2 1220.1,461.6 1218.7,462.0 1217.3,462.7 1216.1,463.6 1215.0,464.6 1214.0,465.8 1213.3,467.1 1212.7,468.4 1212.3,469.9 1212.1,471.4 1212.1,472.9 1212.3,474.5 1212.7,476.0 1213.3,477.5 1214.0,478.8 1215.0,480.1 1216.1,481.3 1217.3,482.3 1218.6,483.2 1220.1,483.9 1221.6,484.4 1223.1,484.8 1224.7,484.9 1226.2,484.8 1227.7,484.5 1229.2,484.1 1230.5,483.4 1231.8,482.6 1232.9,481.6 1233.9,480.4 1234.7,479.1 1235.3,477.7 1235.7,476.3" fill="#b2ddd2" fill-opacity="0.55" stroke="#4d7d94" stroke-width="0.8"/>
<polygon points="1452.4,505.2 1452.5,503.2 1452.3,501.2 1451.8,499.3 1451.1,497.4 1450.0,495.6 1448.7,494.0 1447.2,492.5 1445.4,491.1 1443.5,490.0 1441.4,489.1 1439.3,488.4 1437.0,488.0 1434.8,487.9 1432.6,487.9 1430.4,488.3 1428.3,488.9 1426.3,489.7 1424.5,490.8 1422.8,492.0 1421.4,493.4 1420.2,495.0 1419.3,496.7 1418.6,498.5 1418.2,500.4 1418.1,502.3 1418.3,504.3 1418.8,506.2 1419.6,508.0 1420.6,509.7 1421.9,511.4 1423.4,512.9 1425.1,514.2 1426.9,515.3 1429.0,516.2 1431.1,516.9 1433.3,517.4 1435.5,517.6 1437.8,517.5 1440.0,517.2 1442.1,516.7 1444.1,515.9 1445.9,514.9 1447.6,513.6 1449.1,512.2 1450.3,510.6 1451.3,508.9 1452.0,507.1" fill="#7cc4c0" fill-opacity="0.35" stroke="#4d7d94" stroke-width="0.8"/>
<line x1="1186.9" y1="467.9" x2="1435.2" y2="502.8" stroke="#3e6f8c" stroke-opacity="0.8" stroke-width="1" stroke-dasharray="8,5"/>
<line x1="1228.3" y1="410.7" x2="1223.9" y2="473.1" stroke="#3e6f8c" stroke-opacity="0.8" stroke-width="1" stroke-dasharray="8,5"/>
<line x1="1251.4" y1="418.3" x2="1400.3" y2="433.4" stroke="#3e6f8c" stroke-opacity="0.8" stroke-width="1" stroke-dasharray="8,5"/>
</g></svg>
<div id="hdr">
<div class="btn" style="left:245px"></div>
<div class="btn" style="left:295px"></div>
<div class="btn" style="left:378px"></div>
<div class="btn" style="left:428px"></div>
<div class="btn" style="left:511px"></div>
<div class="btn" style="left:561px"></div>
<div class="btn" style="left:611px;width:42px;background:#00c853;box-shadow:0 2px 8px rgba(0,200,83,0.35)"></div>
<div class="btn" style="left:661px"></div>
<div class="btn" style="left:744px"></div>
<div class="btn" style="left:794px"></div>
<div class="btn" style="left:844px"></div>
<div class="btn" style="left:894px"></div>
<div class="btn" style="left:944px"></div>
<div class="btn" style="left:1027px"></div>
<div class="btn" style="left:1077px"></div>
<div class="btn" style="left:1160px"></div>
<div class="btn" style="left:1210px"></div>
<div class="btn" style="left:1260px"></div>
<div class="btn" style="left:1688px"></div>
<div class="btn" style="left:1738px"></div>
<div class="sep" style="left:357px;top:12px"></div>
<div class="sep" style="left:490px;top:12px"></div>
<div class="sep" style="left:723px;top:6px"></div>
<div class="sep" style="left:1006px;top:6px"></div>
<div class="sep" style="left:1139px;top:6px"></div>
<div class="sep" style="left:1322px;top:6px"></div>
<svg class="abs" style="left:0;top:0" width="1919" height="57"><g>
<g stroke="#bdbdbd" stroke-width="1.1" fill="none">
<path d="M31.5,26 v9 M29,28 l-3,-3 M34,28 l2.5,-3 M29,33 l-2.5,3 M34,33 l2,3" /><ellipse cx="31.5" cy="30.5" rx="2.2" ry="4.5" fill="#cdcdcd" stroke="none"/>
<path d="M49,26 v9 M46.5,28 l-2.5,-3 M51.5,28 l3,-3 M46.5,33 l-2,3 M51.5,33 l2.5,3" /><ellipse cx="49" cy="30.5" rx="2.2" ry="4.5" fill="#cdcdcd" stroke="none"/>
<ellipse cx="40.2" cy="18.5" rx="2.5" ry="1.6" fill="#cdcdcd" stroke="none"/><path d="M37.5,17.5 l-2,-2 M43,17.5 l2,-2 M33,17.5 v-1.5 M47.5,17.5 v-1.5"/>
</g>
<path d="M40.2,9.6 L57.4,16.9 L57.4,37.2 L40.2,44.2 L23,37.2 L23,16.9 Z" fill="none" stroke="#0bc552" stroke-width="5.2" stroke-linejoin="round"/>
<path d="M24.5,18 L40.2,24.2 L55.9,18 M40.2,24.2 L40.2,43.5" fill="none" stroke="#0bc552" stroke-width="4.6"/>
</g><path d="M247.5,22 h5.5 l1.8,2 h6.8 v2.4 h-10.8 l-3.3,6.8 z M248.5,34 l3.6,-7.2 h13.4 l-3.6,7.2 z" fill="#333"/><path d="M269.3,25.8 L277.3,25.8 L273.3,30.3Z" fill="#333"/><path d="M298,23.2 h12 M306.5,19.5 l4.2,3.7 l-4.2,3.7 M314,31 h-14 M302.5,27.3 l-4.2,3.7 l4.2,3.7" stroke="#333" stroke-width="2.6" fill="none" stroke-linejoin="miter"/><path d="M318.5,25.8 L326.5,25.8 L322.5,30.3Z" fill="#333"/><path d="M393.6,22.2 A6.2,6.2 0 1 1 392.3,30.8" stroke="#333" stroke-width="2.3" fill="none"/><path d="M391,19.5 v6.3 h6.3 z" fill="#333"/><path d="M453.4,22.2 A6.2,6.2 0 1 0 454.7,30.8" stroke="#333" stroke-width="2.3" fill="none"/><path d="M456,19.5 v6.3 h-6.3 z" fill="#333"/><path d="M526.5,18 L537.6,29.2 L532.5,29.6 L535.6,35.6 L533,36.6 L530,30.6 L526.5,34 Z" fill="#333"/><path d="M586.8,23.5 H574.9 V34.1 H588.2 Q590,34.1 590,32.2 V20.4 Q590,18.8 588.5,18.8 Q587,18.8 587,20.4 V31.6" stroke="#333" stroke-width="1.7" fill="none" stroke-linejoin="round"/><path d="M587,31.4 L590,33" stroke="#333" stroke-width="1.6"/><path d="M579.1,20.6 Q580.5,18.2 581.9,20.6 V28.7 L580.5,30.9 L579.1,28.7 Z" stroke="#333" stroke-width="1.55" fill="#e9e9e9" stroke-linejoin="round"/><path d="M632,20.3 L637.3,26.3 L634.3,26.3 L634.3,33.5 L629.7,33.5 L629.7,26.3 L626.7,26.3 Z" stroke="#fff" stroke-width="1.5" fill="none" stroke-linejoin="round"/><path d="M676.2,25.5 A6.3,6.3 0 0 1 688,23.5 M687.8,28.5 A6.3,6.3 0 0 1 676,30.6" stroke="#333" stroke-width="2.4" fill="none"/><path d="M689.8,19.8 v5.6 h-5.6z M674.3,34 v-5.6 h5.6z" fill="#333"/><path d="M759,21 h8.5 l3.5,3.8 v8.2 h-12 z" stroke="#333" stroke-width="1.9" fill="none" stroke-linejoin="miter"/><path d="M798.3,23.5 h2 M798.3,23.5 v10.2 h7.5 v-1.5" stroke="#333" stroke-width="1.9" fill="none"/><path d="M802,18.7 h7.5 l4,3.6 v10.5 h-11.5z" fill="#333"/><path d="M817.5,25.8 L825.5,25.8 L821.5,30.3Z" fill="#333"/><path d="M855,19 v16 M847,27 h16" stroke="#333" stroke-width="1.8"/><path d="M855,18 l3,3.4 h-6z M855,36 l3,-3.4 h-6z M846.2,27 l3.4,-3 v6z M863.8,27 l-3.4,-3 v6z" fill="#333"/><path d="M868.3,25.8 L876.3,25.8 L872.3,30.3Z" fill="#333"/><path d="M898,21.5 a1.3,1.3 0 0 1 1.3,-1.3 h7.5 a1.3,1.3 0 0 1 1.3,1.3 v2.6 h-5.2 a1.3,1.3 0 0 0 -1.3,1.3 v5 h-2.3 a1.3,1.3 0 0 1 -1.3,-1.3z" fill="#333"/><rect x="903.4" y="25.2" width="7.6" height="7.8" rx="0.8" stroke="#333" stroke-width="1.5" fill="none"/><path d="M918.5,25.8 L926.5,25.8 L922.5,30.3Z" fill="#333"/><path d="M948.60,20.71 L949.24,20.41 L949.48,18.80 L951.52,18.80 L951.76,20.41 L952.40,20.71 L952.98,21.12 L954.49,20.52 L955.51,22.28 L954.23,23.30 L954.30,24.00 L954.23,24.70 L955.51,25.72 L954.49,27.48 L952.98,26.88 L952.40,27.29 L951.76,27.59 L951.52,29.20 L949.48,29.20 L949.24,27.59 L948.60,27.29 L948.02,26.88 L946.51,27.48 L945.49,25.72 L946.77,24.70 L946.70,24.00 L946.77,23.30 L945.49,22.28 L946.51,20.52 L948.02,21.12ZM952.00,24.00 A1.5,1.5 0 1 0 949.00,24.00 A1.5,1.5 0 1 0 952.00,24.00Z" fill="#333" fill-rule="evenodd"/><path d="M957.70,27.08 L958.29,26.81 L958.52,25.20 L960.48,25.20 L960.71,26.81 L961.30,27.08 L961.83,27.46 L963.34,26.85 L964.33,28.55 L963.04,29.55 L963.10,30.20 L963.04,30.85 L964.33,31.85 L963.34,33.55 L961.83,32.94 L961.30,33.32 L960.71,33.59 L960.48,35.20 L958.52,35.20 L958.29,33.59 L957.70,33.32 L957.17,32.94 L955.66,33.55 L954.67,31.85 L955.96,30.85 L955.90,30.20 L955.96,29.55 L954.67,28.55 L955.66,26.85 L957.17,27.46ZM960.90,30.20 A1.4,1.4 0 1 0 958.10,30.20 A1.4,1.4 0 1 0 960.90,30.20Z" fill="#333" fill-rule="evenodd"/><path d="M969.5,25.8 L977.5,25.8 L973.5,30.3Z" fill="#333"/><path d="M1035.50,22.00 L1036.60,21.51 L1036.96,19.35 L1040.04,19.35 L1040.40,21.51 L1041.50,22.00 L1042.48,22.71 L1044.53,21.94 L1046.07,24.61 L1044.38,26.00 L1044.50,27.20 L1044.38,28.40 L1046.07,29.79 L1044.53,32.46 L1042.48,31.69 L1041.50,32.40 L1040.40,32.89 L1040.04,35.05 L1036.96,35.05 L1036.60,32.89 L1035.50,32.40 L1034.52,31.69 L1032.47,32.46 L1030.93,29.79 L1032.62,28.40 L1032.50,27.20 L1032.62,26.00 L1030.93,24.61 L1032.47,21.94 L1034.52,22.71ZM1041.00,27.20 A2.5,2.5 0 1 0 1036.00,27.20 A2.5,2.5 0 1 0 1041.00,27.20Z" fill="#333" fill-rule="evenodd"/><path d="M1050.7,26.0 L1058.2,26.0 L1054.45,30.2Z" fill="#333"/><g transform="rotate(-45 1097.8 27.2)"><rect x="1089.8" y="24.2" width="16" height="6" stroke="#333" stroke-width="1.8" fill="none"/><path d="M1093,24.3 v2.2 M1096.2,24.3 v2.2 M1099.4,24.3 v2.2 M1102.6,24.3 v2.2" stroke="#333" stroke-width="1.2"/></g><rect x="1173.8" y="20.8" width="14.6" height="12.4" rx="1.4" stroke="#333" stroke-width="1.7" fill="none"/><path d="M1173.8,25 h14.6 M1173.8,29 h14.6 M1178.7,20.8 v12.4 M1183.5,20.8 v12.4" stroke="#333" stroke-width="1.7"/><circle cx="1231" cy="26.9" r="5.7" stroke="#333" stroke-width="2" fill="none"/><path d="M1231,18.9 v4 M1231,31 v4 M1223,26.9 h4 M1235,26.9 h4" stroke="#333" stroke-width="2"/><circle cx="1231" cy="26.9" r="1" fill="#333"/><path d="M1274.8,34 v-13 h13.2" stroke="#333" stroke-width="2" fill="none"/><path d="M1288,23.5 v1.8 M1288,27 v1.8 M1288,30.6 v1.8 M1278.2,33.2 h1.8 M1281.7,33.2 h1.8 M1285.2,33.2 h1.8" stroke="#333" stroke-width="2"/><path d="M1696.00,21.80 L1697.10,21.31 L1697.46,19.15 L1700.54,19.15 L1700.90,21.31 L1702.00,21.80 L1702.98,22.51 L1705.03,21.74 L1706.57,24.41 L1704.88,25.80 L1705.00,27.00 L1704.88,28.20 L1706.57,29.59 L1705.03,32.26 L1702.98,31.49 L1702.00,32.20 L1700.90,32.69 L1700.54,34.85 L1697.46,34.85 L1697.10,32.69 L1696.00,32.20 L1695.02,31.49 L1692.97,32.26 L1691.43,29.59 L1693.12,28.20 L1693.00,27.00 L1693.12,25.80 L1691.43,24.41 L1692.97,21.74 L1695.02,22.51ZM1701.50,27.00 A2.5,2.5 0 1 0 1696.50,27.00 A2.5,2.5 0 1 0 1701.50,27.00Z" fill="#333" fill-rule="evenodd"/><path d="M1711,25.9 L1719,25.9 L1715.0,30.2Z" fill="#333"/><circle cx="1758.8" cy="26.9" r="8" fill="#333"/><rect x="1757.5" y="22.6" width="2.4" height="2.2" fill="#e2e2e2"/><path d="M1756.3,26.2 h3.6 v4.6 h1.1 v1.6 h-4.9 v-1.6 h1.2 v-3 h-1z" fill="#e2e2e2"/></svg>
<div class="abs" style="left:66px;top:15px;font-size:21px;font-weight:700;color:#0bc552;white-space:nowrap;line-height:26px">КонтрБагCAD</div><div class="abs" style="left:1805px;top:17px;font-size:14px;font-weight:700;color:#0bc552;letter-spacing:-0.35px;white-space:nowrap;line-height:20px">Новый проект</div>
</div>
<div id="panel">
<div id="tabs">
<div class="abs" style="left:81px;top:46px;width:80px;height:3px;background:#00c853"></div>
<svg class="abs" style="left:0;top:0" width="319" height="50">
<path d="M40.7,15.6 L44.3,21.6 L37.1,21.6 Z" fill="#666" stroke="#666" stroke-width="1" stroke-linejoin="round"/>
<circle cx="36.4" cy="26.2" r="3.6" fill="#666"/>
<rect x="40.9" y="22.7" width="7.2" height="7" rx="0.8" fill="#666"/>
<g stroke="#00c853" stroke-width="1.7" fill="none">
<path d="M113,17.8 h14.6 M113,22.4 h14.6 M113,27 h14.6"/>
<circle cx="118.2" cy="17.8" r="1.7" fill="#e8e8e8"/><circle cx="123.8" cy="22.4" r="1.7" fill="#e8e8e8"/><circle cx="116.5" cy="27" r="1.7" fill="#e8e8e8"/>
</g>
<path d="M200.3,15.6 L207.8,19.3 L200.3,23 L192.8,19.3 Z" fill="#666"/>
<path d="M193.4,22.2 L200.3,25.6 L207.2,22.2 L207.8,23.6 L200.3,27.3 L192.8,23.6 Z M193.4,25.9 L200.3,29.3 L207.2,25.9 L207.8,27.3 L200.3,31 L192.8,27.3 Z" fill="#666"/>
<path d="M274.2,21.3 A6.6,6.6 0 1 1 274.6,26.5" stroke="#666" stroke-width="2" fill="none"/>
<path d="M272.3,17 v5.6 h5.6 z" fill="#666"/>
<path d="M280.3,19.8 v4.2 l2.6,1.9" stroke="#666" stroke-width="1.8" fill="none"/>
</svg>
</div>
<div class="abs" style="left:10px;top:60px;font-size:14px;font-weight:700;color:#333;letter-spacing:0px;white-space:nowrap;line-height:18px">ВЫТЯГИВАНИЕ</div>
<div class="lbl" style="left:10px;top:112px;line-height:18px">Высота (мм):</div>
<div class="sel" style="left:126px;top:103px;width:183px;height:34px"><span class="abs" style="left:13px;top:7px;font-size:13px;line-height:18px;color:#222">27</span>
<div class="abs" style="left:151px;top:7px;width:18px;height:18px;background:#e4e4e8"></div>
<svg class="abs" style="left:151px;top:7px" width="18" height="18"><path d="M5.5,7 L9,3.5 L12.5,7 M5.5,11 L9,14.5 L12.5,11" stroke="#8a8a8a" stroke-width="1.3" fill="none"/></svg></div>
<div class="lbl" style="left:10px;top:170px;line-height:18px">Направление:</div>
<div class="sel" style="left:172px;top:161px;width:137px;height:35px"><span class="abs" style="left:12px;top:7px;font-size:14px;line-height:18px;color:#222">Наружу</span>
<svg class="abs" style="left:119px;top:13px" width="12" height="8"><path d="M3,2 L6.2,5.2 L9.4,2" stroke="#333" stroke-width="1.6" fill="none"/></svg></div>
<div class="lbl" style="left:10px;top:229px;line-height:18px">Операция:</div>
<div class="sel" style="left:175px;top:220px;width:134px;height:35px"><span class="abs" style="left:12px;top:7px;font-size:14px;line-height:18px;color:#222">Новый объект</span>
<svg class="abs" style="left:116px;top:13px" width="12" height="8"><path d="M3,2 L6.2,5.2 L9.4,2" stroke="#333" stroke-width="1.6" fill="none"/></svg></div>
<div class="abs" style="left:10px;top:280px;width:139px;height:41px;border-radius:6px;background:linear-gradient(135deg,#4cae52,#42a047)"></div>
<svg class="abs" style="left:33px;top:295px" width="16" height="12"><path d="M1.5,5.8 L5.5,9.6 L13.4,1.6" stroke="#fff" stroke-width="2.3" fill="none"/></svg>
<div class="abs" style="left:54px;top:291px;font-size:14px;color:#fff;line-height:18px;white-space:nowrap">Выполнить</div>
<div class="abs" style="left:153px;top:279px;width:117px;height:43px;border-radius:6px;background:#f0f0f0;border:1px solid #d3d3d3"></div>
<svg class="abs" style="left:178px;top:296px" width="11" height="11"><path d="M1,1 L10,10 M10,1 L1,10" stroke="#222" stroke-width="1.9"/></svg>
<div class="abs" style="left:196.5px;top:292px;font-size:13.2px;color:#333;line-height:18px;white-space:nowrap">Отмена</div>
<div class="abs" style="left:10px;top:322px;font-size:11.8px;color:#4caf50;line-height:16px;white-space:nowrap">Выбрано регионов: 1</div>
<svg class="abs" style="left:10px;top:365px" width="12" height="12"><circle cx="5.8" cy="6" r="5.8" fill="#888"/><rect x="5" y="2.6" width="1.7" height="1.6" fill="#fff"/><path d="M4.3,5 h2.4 v3.6 h0.9 v1.1 h-3.5 v-1.1 h0.9 v-2.5 h-0.7z" fill="#fff"/></svg>
<div class="abs" style="left:21.6px;top:363px;font-size:12px;color:#7a7a7a;line-height:16px;white-space:nowrap">Описание:</div>
<div class="desc" style="top:379px;line-height:16px">Этот инструмент создает объемное тело путем<br>линейного вытягивания плоского эскиза в<br>перпендикулярном ему направлении.<br><br>• Клик по фигуре: выделить/снять выделение<br>• Перетаскивайте стрелку для изменения высоты<br>• Escape для отмены, Enter для подтверждения</div>
<div class="abs" style="left:10px;top:510px;width:299px;height:1px;background:#e2e2e2"></div>

</div>
<div id="status">
<svg class="abs" style="left:19px;top:14px" width="11" height="13"><path d="M1.2,0.8 L9.6,8.6 L5.6,8.9 L7.6,12.4 L5.9,12.9 L4,9.5 L1.2,12 Z" fill="#444"/></svg>
<span class="abs" style="left:32px;top:13px;line-height:16px;white-space:nowrap">Режим: Вытягивание</span>
<div class="abs" style="left:171px;top:15px;width:1px;height:13px;background:#cfcfcf"></div>
<span class="abs" style="left:188px;top:13px;line-height:16px;white-space:nowrap">Выбрано: 0</span>
<span class="abs" style="left:1272.5px;top:13px;line-height:16px;white-space:nowrap;font-size:11.8px">FPS: 98</span>
<div class="abs" style="left:1331px;top:15px;width:1px;height:13px;background:#cfcfcf"></div>
<span class="abs" style="left:1347px;top:13px;line-height:16px;white-space:nowrap;font-size:12px"><b>Версия:</b></span>
<span class="abs" style="left:1399px;top:13px;line-height:16px;white-space:nowrap;font-size:12px">0.9.19</span>
<span class="abs" style="left:1448px;top:13px;line-height:16px;white-space:nowrap;font-size:12.6px">Следить за обновлениями:</span>
<span class="abs" style="left:1607px;top:13px;line-height:16px;white-space:nowrap;font-size:12.3px;color:#0bc552;text-decoration:underline">в ТГ</span>
<span class="abs" style="left:1634px;top:13px;line-height:16px;white-space:nowrap;font-size:12.6px;color:#0bc552;text-decoration:underline">в ВК</span>
<span class="abs" style="left:1674.5px;top:13px;line-height:16px;white-space:nowrap;font-size:13px;color:#0bc552;text-decoration:underline">Гайд на 3dtoday.ru</span>
<span class="abs" style="left:1800px;top:13px;line-height:16px;white-space:nowrap;font-size:12.75px;color:#0bc552;text-decoration:underline">Прошлая версия</span>

</div>
<div class="abs" style="left:1390px;top:67px;width:200px;height:30px;border-radius:15px;background:#3a9cf0;box-shadow:0 2px 8px rgba(76,220,120,0.35);z-index:3"></div>
<div class="abs" style="left:1404.5px;top:74px;font-size:12.45px;color:#3b3b3b;line-height:16px;white-space:nowrap;z-index:3">Высота установлена: 27.0 мм</div>
<div class="abs" style="left:20px;top:819px;width:275px;height:37px;border-radius:4px;background:rgba(40,40,40,0.85);z-index:3"></div>
<div class="abs" style="left:36px;top:830px;font-family:'Liberation Mono',monospace;font-size:11.9px;color:#fff;line-height:16px;white-space:nowrap;z-index:3">X: -9291.97, Y: 0.00, Z: -25274.33</div>
<div class="abs" style="left:1280px;top:788px;width:300px;height:68px;border-radius:6px;background:rgba(40,40,40,0.85);z-index:3"></div>
<div class="abs" style="left:1295px;top:799px;font-size:11.9px;color:#fff;line-height:16px;white-space:nowrap;z-index:3">Управление: ЛКМ - выделение, ПКМ -<br>вращение, Колесико - перемещение камеры S -<br>масштабирование R - вращение</div>
<div class="abs" style="left:1568px;top:432px;width:33px;height:70px;background:#fff;border:1px solid #ddd;border-right:none;border-radius:4px 0 0 4px;z-index:3"></div>
<svg class="abs" style="left:1579px;top:458px;z-index:3" width="12" height="18"><path d="M2.5,2 L8.8,8.6 L2.5,15.2" stroke="#222" stroke-width="2.3" fill="none"/></svg>
<div class="abs" style="left:54px;top:229px;width:32px;height:32px;border-radius:5px;background:#f0f0f0;z-index:3"></div>
<div class="abs" style="left:94px;top:229px;width:32px;height:32px;border-radius:5px;background:#f0f0f0;z-index:3"></div>
<svg class="abs" style="left:54px;top:229px;z-index:3" width="80" height="32">
<path d="M15.9,8.6 24.3,16.0 22.4,16.0 22.4,22.3 21.6,23.0 18.6,23.0 17.9,22.3 17.9,18.2 13.9,18.2 13.9,22.3 13.2,23.0 10.5,23.0 9.8,22.3 9.8,16.0 7.7,16.0Z" fill="#333" stroke="#333" stroke-width="0.6" stroke-linejoin="round"/><path d="M56.0,8.9 62.8,11.9 62.8,20.0 56.0,22.8 49.2,20.0 49.2,11.9Z" fill="#333" stroke="#333" stroke-width="0.8" stroke-linejoin="round"/><path d="M51.4,12.3 56.0,10.3 60.6,12.3 56.0,14.3Z M57.1,15.8 61.0,14.1 61.0,18.9 57.1,20.7Z" fill="#fff"/>
</svg>
<svg class="abs" style="left:0;top:57px;z-index:3" width="200" height="160" viewBox="0 57 200 160">
<polygon points="50.2,109.5 70.3,106.1 121.9,107 132.6,110.1 140.8,130.2 139.5,159.2 130.1,185.6 114.4,195.7 80.4,198.2 54.6,190 37,164.2 35.1,132.8" fill="#d3d3d3" stroke="#555" stroke-width="0.9" stroke-linejoin="round"/>
<polygon points="52,111.4 78.5,113.6 116.2,113.2 132.6,110.1 121.9,107 70.3,106.1 50.2,109.5" fill="#dcdcdc"/>
<path d="M52,111.4 L78.5,113.6 L116.2,113.2 L132.6,110.1 M78.5,113.6 L101.1,142.8 L116.2,113.2 M101.1,142.8 L100.5,178.7 L80.4,198.2 M100.5,178.7 L114.4,195.7 M50.2,109.5 L35.1,132.8" stroke="#222" stroke-width="1" fill="none" stroke-linejoin="round"/>
<text x="0" y="0" transform="translate(44,157) rotate(12)" font-family="Liberation Sans" font-size="15.5" fill="#4052e6" stroke="#4052e6" stroke-width="0.35">Перед</text>
<text x="0" y="0" transform="translate(110,162) rotate(-26) scale(0.78,1)" font-family="Liberation Sans" font-size="14" fill="#e84c4c" opacity="0.9">Право</text>
</svg>

</body></html>
